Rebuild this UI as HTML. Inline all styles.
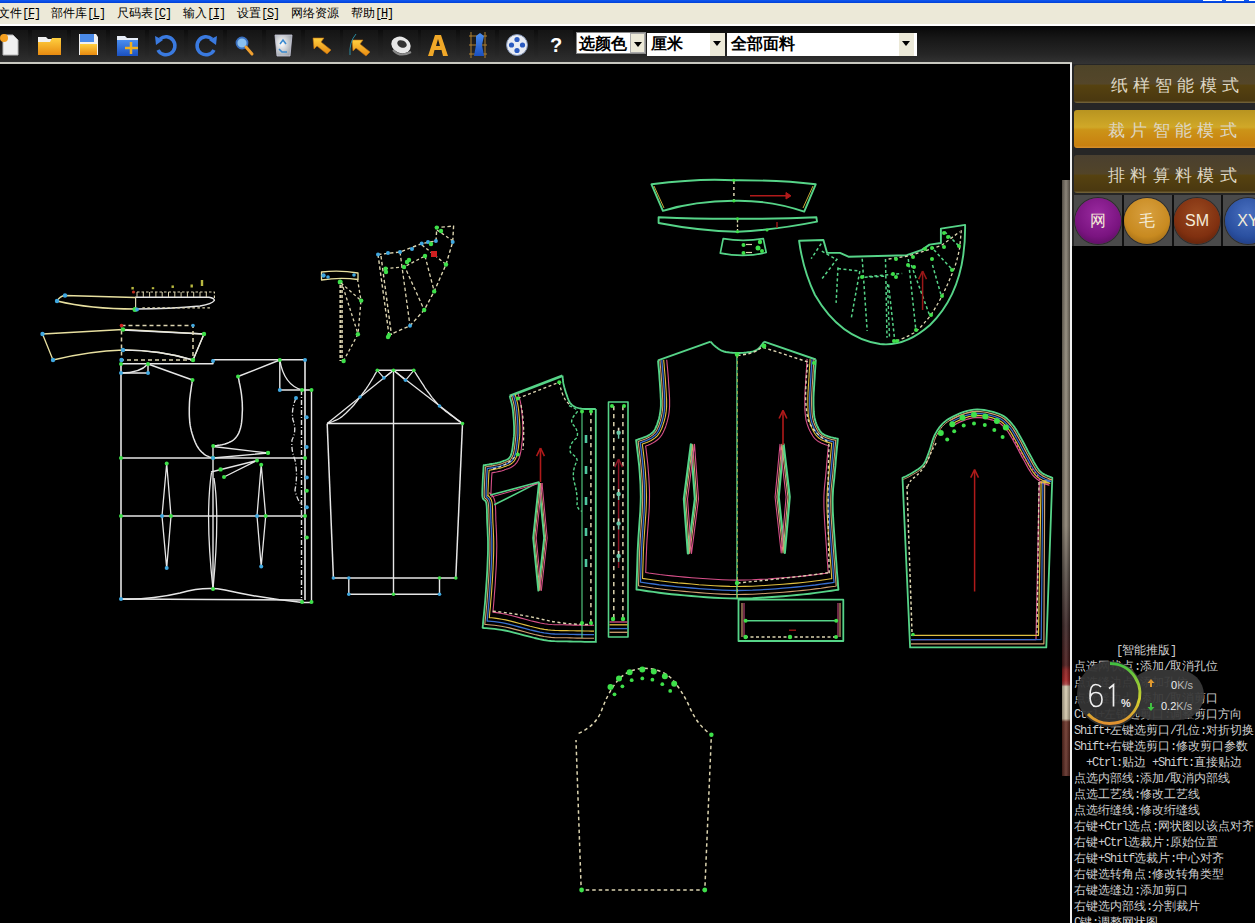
<!DOCTYPE html>
<html><head><meta charset="utf-8">
<style>
*{margin:0;padding:0;box-sizing:border-box}
html,body{width:1255px;height:923px;overflow:hidden;background:#000;font-family:"Liberation Sans",sans-serif}
#title{position:absolute;left:0;top:0;width:1255px;height:3px;background:linear-gradient(#1058f0,#0040d8)}
#menu{position:absolute;left:0;top:3px;width:1255px;height:23px;background:#ece9d8;border-bottom:2px solid #fff}
#menu .m{font-style:normal;font-family:"Liberation Mono",monospace;letter-spacing:-1.2px}
#menu span{position:absolute;top:2px;font-size:12px;color:#000;white-space:nowrap;line-height:16px}
#tb{position:absolute;left:0;top:26px;width:1255px;height:38px;background:linear-gradient(#060606 0%,#161616 30%,#262626 75%,#343434 100%)}
#tbline{position:absolute;left:0;top:62px;width:1072px;height:2px;background:#c8c8c0}
.tile{position:absolute;top:4px;width:35px;height:31px;background:linear-gradient(#141414,#222 60%,#2e2e2e)}
#canvas{position:absolute;left:0;top:64px;width:1071px;height:859px;background:#000}
#vline{position:absolute;left:1070px;top:63px;width:2px;height:860px;background:#f0f0f0}
#right{position:absolute;left:1072px;top:64px;width:183px;height:859px;background:#000}
.mbtn{position:absolute;left:2px;width:181px;height:38px;border-radius:3px 0 0 3px;color:#ddd6c4;font-size:17px;letter-spacing:5.3px;text-align:center;line-height:42px;padding-left:24px}
.dd{position:absolute;background:#fff;font-size:16px;font-weight:bold;color:#000;line-height:21px}
.ddb{position:absolute;top:0;width:15px;background:#ece9d8}
.ddb:after{content:"";position:absolute;left:3px;top:8px;border-left:4px solid transparent;border-right:4px solid transparent;border-top:5px solid #000}
#help{position:absolute;left:1074px;top:643px;font-family:"Liberation Mono",monospace;font-size:12px;line-height:16px;color:#cfcfcf;white-space:pre}
.circ{position:absolute;width:46px;height:46px;border-radius:50%;color:#f4ecd8;font-size:16px;text-align:center;line-height:46px;box-shadow:0 0 0 1px rgba(0,0,0,.4)}
#help .l{letter-spacing:-1.2px}
</style></head><body>
<div id="title"></div>
<div style="position:absolute;left:1203px;top:0;width:19px;height:1px;background:#fff"></div><div style="position:absolute;left:1226px;top:0;width:18px;height:1px;background:#fff"></div><div style="position:absolute;left:1249px;top:0;width:6px;height:1px;background:#fff"></div>
<div id="menu">
<span style="left:-2px">文件<i class="m">[<u>F</u>]</i></span>
<span style="left:51px">部件库<i class="m">[<u>L</u>]</i></span>
<span style="left:117px">尺码表<i class="m">[<u>C</u>]</i></span>
<span style="left:183px">输入<i class="m">[<u>I</u>]</i></span>
<span style="left:237px">设置<i class="m">[<u>S</u>]</i></span>
<span style="left:291px">网络资源</span>
<span style="left:351px">帮助<i class="m">[<u>H</u>]</i></span>
</div>
<div id="tb">
<div class="tile" style="left:-7px"></div>
<div class="tile" style="left:32px"></div>
<div class="tile" style="left:71px"></div>
<div class="tile" style="left:110px"></div>
<div class="tile" style="left:149px"></div>
<div class="tile" style="left:188px"></div>
<div class="tile" style="left:227px"></div>
<div class="tile" style="left:266px"></div>
<div class="tile" style="left:305px"></div>
<div class="tile" style="left:343px"></div>
<div class="tile" style="left:383px"></div>
<div class="tile" style="left:421px"></div>
<div class="tile" style="left:460px"></div>
<div class="tile" style="left:499px"></div>
<div class="tile" style="left:538px"></div>
</div>
<div id="tbline"></div>
<svg style="position:absolute;left:0;top:26px" width="580" height="37" viewBox="0 26 580 37">
<defs>
<linearGradient id="gor" x1="0" y1="0" x2="0" y2="1"><stop offset="0" stop-color="#ffd040"/><stop offset="1" stop-color="#e88a10"/></linearGradient>
<linearGradient id="gbl" x1="0" y1="0" x2="0" y2="1"><stop offset="0" stop-color="#4a8ef0"/><stop offset="1" stop-color="#1a50c0"/></linearGradient>
<radialGradient id="gfl" cx=".4" cy=".4" r=".7"><stop offset="0" stop-color="#fff"/><stop offset="1" stop-color="#9aa0a8"/></radialGradient>
</defs>
<!-- new doc -->
<path d="M3 35 L13 35 L18 40 L18 55 L3 55 Z" fill="#f0f0f0" stroke="#b8b8b8" stroke-width="1"/>
<circle cx="4" cy="38" r="4" fill="#f5a020"/>
<!-- open folder -->
<path d="M38 37 L46 37 L48 39 L60 39 L60 55 L38 55 Z" fill="#f0f0f0"/>
<path d="M38 42 L50 42 L52 38 L61 38 L61 55 L38 55 Z" fill="url(#gor)"/>
<!-- save -->
<path d="M79 34 L96 34 L98 37 L98 55 L79 55 Z" fill="#f0f0f0"/>
<rect x="80" y="34" width="14" height="8" fill="#4a8ae8"/>
<rect x="80" y="44" width="17" height="11" fill="url(#gor)"/>
<!-- folder plus -->
<path d="M117 36 L125 36 L127 38 L138 38 L138 56 L117 56 Z" fill="#e8eef8"/>
<path d="M117 40 L138 40 L138 56 L117 56 Z" fill="url(#gbl)"/>
<path d="M131 42 V54 M125 48 H138" stroke="#f0b020" stroke-width="2.5"/>
<!-- undo/redo -->
<path d="M160 39 A9 9 0 1 1 158 50" fill="none" stroke="#3a7ae0" stroke-width="3.5"/>
<path d="M155 36 L163 40 L156 45 Z" fill="#3a7ae0"/>
<path d="M212 39 A9 9 0 1 0 214 50" fill="none" stroke="#3a7ae0" stroke-width="3.5"/>
<path d="M217 36 L209 40 L216 45 Z" fill="#3a7ae0"/>
<!-- zoom -->
<circle cx="242" cy="43" r="5.5" fill="#8ac0f0" stroke="#3a70c0" stroke-width="1.8"/>
<path d="M246 47 L252 54" stroke="#f0a030" stroke-width="3" stroke-linecap="round"/>
<!-- recycle bin -->
<path d="M275 35 H292 L290 56 H277 Z" fill="url(#gfl)" stroke="#ccd" stroke-width=".8"/>
<path d="M280 44 L283 40 L286 44 M279 49 L282 52 H287" fill="none" stroke="#3a8ad0" stroke-width="1.6"/>
<!-- arrows -->
<path d="M313 38 L324 38 L321 42 L331 50 L327 54 L317 46 L314 49 Z" fill="url(#gor)" stroke="#c07010" stroke-width=".6"/>
<path d="M352 40 L363 40 L360 44 L370 52 L366 56 L356 48 L353 51 Z" fill="url(#gor)" stroke="#c07010" stroke-width=".6"/>
<path d="M356 34 Q349 42 350 55" fill="none" stroke="#2a8aa0" stroke-width="1"/>
<!-- ring -->
<ellipse cx="401" cy="45" rx="10" ry="8" fill="#e8e8e8" transform="rotate(25 401 45)"/>
<ellipse cx="402" cy="44" rx="5" ry="3.5" fill="#333" transform="rotate(25 402 44)"/>
<path d="M393 50 Q400 58 411 52" fill="none" stroke="#888" stroke-width="2"/>
<!-- A -->
<path d="M428 56 L435 35 L441 35 L448 56 L443 56 L441.5 50 L434.5 50 L433 56 Z M436 46 L440 46 L438 39 Z" fill="#f0a828" fill-rule="evenodd"/>
<!-- dress form -->
<path d="M471 32 L471 58 M485 32 L485 58" stroke="#b08030" stroke-width="1"/>
<path d="M469 36 H487 M469 45 H487 M469 54 H487" stroke="#b08030" stroke-width="1"/>
<path d="M476 36 L480 33 L484 36 L482 45 L484 56 L474 56 L476 45 Z" fill="url(#gbl)"/>
<!-- film reel -->
<circle cx="517" cy="45" r="10.5" fill="#e8ecf4" stroke="#8090b0" stroke-width="1"/>
<circle cx="517" cy="39.5" r="2.6" fill="#2a5ac0"/><circle cx="517" cy="50.5" r="2.6" fill="#2a5ac0"/>
<circle cx="511.5" cy="45" r="2.6" fill="#2a5ac0"/><circle cx="522.5" cy="45" r="2.6" fill="#2a5ac0"/>
<!-- ? -->
<text x="556" y="52" font-family="Liberation Sans" font-weight="bold" font-size="20" fill="#fff" text-anchor="middle">?</text>
</svg>
<div class="dd" style="left:576px;top:32px;width:70px;height:22px;border:1px solid #888;padding-left:2px">选颜色<div class="ddb" style="left:53px;height:20px;border:1px solid #aaa"></div></div>
<div class="dd" style="left:647px;top:33px;width:78px;height:23px;padding-left:4px">厘米<div class="ddb" style="left:63px;height:23px"></div></div>
<div class="dd" style="left:727px;top:33px;width:190px;height:23px;padding-left:4px">全部面料<div class="ddb" style="left:172px;height:23px"></div></div>
<div id="canvas"></div>
<svg style="position:absolute;left:0;top:0" width="1071" height="923" viewBox="0 0 1071 923" stroke-linecap="butt" stroke-linejoin="round"><path d="M135 297.5 L65 295.5 Q60 296 57 301 Q90 309 135 309" stroke="#e8e0a0" stroke-width="1.3" fill="none"/>
<path d="M135 297.3 L209 297.3 Q214 298 214.4 300.3 Q212 304 200 306 Q170 309 135 309" stroke="#e6e6e6" stroke-width="1.4" fill="none"/>
<path d="M137 292 L214.4 292 L214.4 300" stroke="#dcd4b0" stroke-width="1.2" fill="none" stroke-dasharray="2.5 2"/>
<path d="M142.4 307.9 L210 307.9" stroke="#dcd4b0" stroke-width="1.2" fill="none" stroke-dasharray="2.5 2.5"/>
<path d="M135.6 297L135.6 309" stroke="#dcd4b0" stroke-width="1.2" fill="none"/>
<path d="M137.0 292L137.0 297" stroke="#dcd4b0" stroke-width="1" fill="none"/>
<path d="M143.3 292L143.3 297" stroke="#dcd4b0" stroke-width="1" fill="none"/>
<path d="M149.6 292L149.6 297" stroke="#dcd4b0" stroke-width="1" fill="none"/>
<path d="M155.9 292L155.9 297" stroke="#dcd4b0" stroke-width="1" fill="none"/>
<path d="M162.2 292L162.2 297" stroke="#dcd4b0" stroke-width="1" fill="none"/>
<path d="M168.5 292L168.5 297" stroke="#dcd4b0" stroke-width="1" fill="none"/>
<path d="M174.8 292L174.8 297" stroke="#dcd4b0" stroke-width="1" fill="none"/>
<path d="M181.1 292L181.1 297" stroke="#dcd4b0" stroke-width="1" fill="none"/>
<path d="M187.4 292L187.4 297" stroke="#dcd4b0" stroke-width="1" fill="none"/>
<path d="M193.7 292L193.7 297" stroke="#dcd4b0" stroke-width="1" fill="none"/>
<path d="M200.0 292L200.0 297" stroke="#dcd4b0" stroke-width="1" fill="none"/>
<path d="M206.3 292L206.3 297" stroke="#dcd4b0" stroke-width="1" fill="none"/>
<rect x="131.4" y="286.95" width="2.4" height="2.5" fill="#b8b840"/>
<rect x="151.8" y="287.2" width="2.4" height="2" fill="#b8b840"/>
<rect x="171.5" y="285.45" width="2.4" height="2.5" fill="#b8b840"/>
<rect x="190.5" y="284.5" width="2.4" height="3" fill="#b8b840"/>
<rect x="200.8" y="280.0" width="2.4" height="6" fill="#b8b840"/>
<circle cx="133.5" cy="292" r="1.6" fill="#c03020"/>
<circle cx="57" cy="301" r="2.2" fill="#40a8e0"/>
<circle cx="65" cy="295.5" r="2.2" fill="#40a8e0"/>
<circle cx="135" cy="309.5" r="2.5" fill="#3ee04a"/>
<circle cx="137" cy="309.5" r="2" fill="#40a8e0"/>
<path d="M42.5 334 L123 329.5 L204 334 L193 360 Q160 350 123 350 Q90 351 53 360 Z" stroke="#e8e0a0" stroke-width="1.3" fill="none"/>
<path d="M123 330 L204 334 L193 360 Q160 350 123 350" stroke="#e6e6e6" stroke-width="1.4" fill="none"/>
<path d="M121.5 325.5 L193 325.5 L193 360 L121.5 360 Z" stroke="#dcd4b0" stroke-width="1.5" fill="none" stroke-dasharray="4 3"/>
<circle cx="121.5" cy="325.5" r="1.8" fill="#d02020"/>
<circle cx="193" cy="325.5" r="1.8" fill="#40a8e0"/>
<circle cx="42.5" cy="334" r="2.2" fill="#40a8e0"/>
<circle cx="123" cy="329.5" r="2.2" fill="#3ee04a"/>
<circle cx="204" cy="334" r="2.2" fill="#3ee04a"/>
<circle cx="53" cy="360" r="2.2" fill="#40a8e0"/>
<circle cx="123" cy="350" r="2.2" fill="#40a8e0"/>
<circle cx="193" cy="360" r="2.2" fill="#3ee04a"/>
<circle cx="121.5" cy="360" r="2.2" fill="#40a8e0"/>
<path d="M121 363.8 L212.9 363.8 L212.9 359.7 L305 359.7 L305 600" stroke="#e6e6e6" stroke-width="1.6" fill="none"/>
<path d="M121 364L121 600" stroke="#e6e6e6" stroke-width="1.6" fill="none"/>
<path d="M121 373 L148 373 L148 364" stroke="#e6e6e6" stroke-width="1.4" fill="none"/>
<path d="M121 373 Q140 373 148 364" stroke="#e6e6e6" stroke-width="1.4" fill="none"/>
<path d="M148 364L192.5 380" stroke="#e6e6e6" stroke-width="1.4" fill="none"/>
<path d="M192.5 379.6 192.2 381.4 191.9 383.7 191.4 386.5 191.0 389.6 190.5 392.8 190.1 396.2 189.7 399.4 189.5 402.4 189.4 405.3 189.3 408.2 189.3 411.2 189.3 414.1 189.4 417.1 189.6 419.9 189.8 422.7 190.2 425.4 190.7 428.0 191.3 430.7 192.0 433.2 192.8 435.7 193.6 438.2 194.5 440.4 195.3 442.5 196.2 444.4 197.1 446.1 198.0 447.5 198.9 448.9 199.8 450.0 200.8 451.1 201.7 452.0 202.7 452.9 203.7 453.8 204.7 454.6 205.9 455.3 207.0 455.9 208.2 456.4 209.3 456.9 210.3 457.3 211.2 457.6 211.8 457.9" stroke="#e6e6e6" stroke-width="1.5" fill="none"/>
<path d="M279.8 360L238 376.5" stroke="#e6e6e6" stroke-width="1.4" fill="none"/>
<path d="M238.2 376.7 238.5 378.2 238.9 380.2 239.3 382.5 239.9 385.1 240.4 387.9 240.9 390.6 241.3 393.2 241.6 395.6 241.8 397.8 242.0 399.9 242.2 401.9 242.3 403.9 242.3 405.9 242.4 407.9 242.4 409.9 242.3 411.9 242.2 414.0 242.1 416.1 242.0 418.2 241.8 420.3 241.6 422.4 241.3 424.4 240.9 426.3 240.5 428.0 240.0 429.6 239.5 431.1 238.9 432.6 238.3 433.9 237.6 435.2 236.8 436.4 235.9 437.5 235.0 438.5 234.0 439.5 232.9 440.3 231.7 441.1 230.4 441.8 229.1 442.4 227.7 443.0 226.4 443.5 225.0 444.0 223.5 444.4 221.9 444.8 220.2 445.1 218.5 445.3 216.8 445.6 215.4 445.7 214.1 445.9 213.2 446.0" stroke="#e6e6e6" stroke-width="1.5" fill="none"/>
<path d="M279.8 360 L279.8 390 L311.5 390 L311.5 602.5" stroke="#e6e6e6" stroke-width="1.4" fill="none"/>
<path d="M279.8 360 Q284 385 302 390" stroke="#e6e6e6" stroke-width="1.4" fill="none"/>
<path d="M301.5 390 L301.5 602" stroke="#e0e0e0" stroke-width="1.4" fill="none" stroke-dasharray="5 2 1 2"/>
<path d="M213 446L213 458" stroke="#e6e6e6" stroke-width="1.4" fill="none"/>
<path d="M296 398 Q291 410 293 420 Q297 430 292 440 Q291 450 295 460 Q298 475 295 490 Q297 500 302 505" stroke="#e0e0e0" stroke-width="1.3" fill="none" stroke-dasharray="5 2 1 2"/>
<path d="M121 458L305 458" stroke="#e6e6e6" stroke-width="1.5" fill="none"/>
<path d="M121 516L305 516" stroke="#e6e6e6" stroke-width="1.5" fill="none"/>
<path d="M213 446.5 L268 453 L213 458" stroke="#e6e6e6" stroke-width="1.3" fill="none"/>
<path d="M211 472 L257 460.5 L224 477" stroke="#e6e6e6" stroke-width="1.3" fill="none"/>
<path d="M213 458L213 589" stroke="#e6e6e6" stroke-width="1.4" fill="none"/>
<path d="M211.5 472.5 Q205 516 213 589 Q220 516 214 478" stroke="#e6e6e6" stroke-width="1.3" fill="none"/>
<path d="M166.7 463.5 L162 516 L166.7 568 L171 516 Z" stroke="#e6e6e6" stroke-width="1.3" fill="none"/>
<path d="M261.2 464.7 L257 516 L261.2 566.5 L265.7 516 Z" stroke="#e6e6e6" stroke-width="1.3" fill="none"/>
<path d="M121 599 L302.5 600" stroke="#e6e6e6" stroke-width="1.5" fill="none"/>
<path d="M121 599 Q150 600 180 593 Q205 586 225 590 Q260 598 302.5 602.5 L311.5 602.5" stroke="#e6e6e6" stroke-width="1.5" fill="none"/>
<circle cx="121" cy="364" r="2" fill="#3ee04a"/>
<circle cx="148" cy="364" r="2" fill="#3ee04a"/>
<circle cx="192.5" cy="380" r="2" fill="#3ee04a"/>
<circle cx="238" cy="376.5" r="2" fill="#3ee04a"/>
<circle cx="279.8" cy="360" r="2" fill="#3ee04a"/>
<circle cx="121" cy="458" r="2" fill="#3ee04a"/>
<circle cx="121" cy="516" r="2" fill="#3ee04a"/>
<circle cx="213" cy="457.8" r="2" fill="#3ee04a"/>
<circle cx="268" cy="453" r="2" fill="#3ee04a"/>
<circle cx="257" cy="460.5" r="2" fill="#3ee04a"/>
<circle cx="224" cy="477" r="2" fill="#3ee04a"/>
<circle cx="171" cy="516" r="2" fill="#3ee04a"/>
<circle cx="265.7" cy="516" r="2" fill="#3ee04a"/>
<circle cx="166.7" cy="463.5" r="2" fill="#3ee04a"/>
<circle cx="261.2" cy="464.7" r="2" fill="#3ee04a"/>
<circle cx="213" cy="589" r="2" fill="#3ee04a"/>
<circle cx="305" cy="458" r="2" fill="#3ee04a"/>
<circle cx="305" cy="516" r="2" fill="#3ee04a"/>
<circle cx="302" cy="390" r="2" fill="#3ee04a"/>
<circle cx="311.5" cy="390" r="2" fill="#3ee04a"/>
<circle cx="306.8" cy="490.7" r="2" fill="#3ee04a"/>
<circle cx="306.8" cy="537.6" r="2" fill="#3ee04a"/>
<circle cx="311.5" cy="602" r="2" fill="#3ee04a"/>
<circle cx="302" cy="602" r="2" fill="#3ee04a"/>
<circle cx="213.2" cy="446" r="2" fill="#3ee04a"/>
<circle cx="220.6" cy="469.4" r="2.2" fill="#3ee04a"/>
<circle cx="268" cy="452.7" r="2" fill="#3ee04a"/>
<circle cx="121" cy="599" r="2" fill="#40a8e0"/>
<circle cx="121" cy="373" r="2" fill="#40a8e0"/>
<circle cx="148" cy="373" r="2" fill="#40a8e0"/>
<circle cx="213" cy="361" r="2" fill="#40a8e0"/>
<circle cx="305" cy="360" r="2" fill="#40a8e0"/>
<circle cx="306.6" cy="417.3" r="2" fill="#40a8e0"/>
<circle cx="306.6" cy="447" r="2" fill="#40a8e0"/>
<circle cx="279.8" cy="390" r="2" fill="#40a8e0"/>
<circle cx="162" cy="516" r="2" fill="#40a8e0"/>
<circle cx="257" cy="516" r="2" fill="#40a8e0"/>
<circle cx="166.7" cy="568" r="2" fill="#40a8e0"/>
<circle cx="261.2" cy="566.5" r="2" fill="#40a8e0"/>
<circle cx="213" cy="458" r="2" fill="#40a8e0"/>
<circle cx="306.8" cy="477.4" r="2" fill="#40a8e0"/>
<circle cx="306.8" cy="507.2" r="2" fill="#40a8e0"/>
<circle cx="296" cy="398" r="2" fill="#40a8e0"/>
<path d="M321.5 272 Q340 270 358 273 L358 279.5 Q340 277 321.5 280 Z" stroke="#e8e0a0" stroke-width="1.3" fill="none"/>
<circle cx="323.5" cy="275.5" r="2.2" fill="#40a8e0"/>
<circle cx="328" cy="277" r="1.8" fill="#40a8e0"/>
<circle cx="354" cy="275" r="1.8" fill="#40a8e0"/>
<circle cx="340.2" cy="282" r="2.5" fill="#3ee04a"/>
<path d="M340.2 285 L340.2 361 M342 285 L342 361" stroke="#dcd4b0" stroke-width="1.6" fill="none" stroke-dasharray="3 2"/>
<path d="M341 283 L361 300.5 L358 334 L343.5 361" stroke="#dcd4b0" stroke-width="1.3" fill="none" stroke-dasharray="3 2.5"/>
<path d="M357.5 279 L361 300.5" stroke="#dcd4b0" stroke-width="1.3" fill="none" stroke-dasharray="3 2.5"/>
<path d="M343 287 L358 334" stroke="#dcd4b0" stroke-width="1.3" fill="none" stroke-dasharray="3 2.5"/>
<circle cx="361.2" cy="300.6" r="2.2" fill="#3ee04a"/>
<circle cx="357.9" cy="334.2" r="2.2" fill="#3ee04a"/>
<circle cx="343.6" cy="361" r="2.2" fill="#3ee04a"/>
<path d="M378 254.5 L400 252 L422 243.5 L436 241 L436.8 227.6 L453.6 226 L452.7 242 L446 264.5 L434.2 291.4 L424.2 310 L410 325.8 L389 335" stroke="#dcd4b0" stroke-width="1.4" fill="none" stroke-dasharray="3.5 2.5"/>
<path d="M378 254.5 L389 335 M381 256 L391.5 335" stroke="#dcd4b0" stroke-width="1.4" fill="none" stroke-dasharray="3.5 2.5"/>
<path d="M400 252 L410 325.8" stroke="#dcd4b0" stroke-width="1.3" fill="none" stroke-dasharray="3.5 2.5"/>
<path d="M425 256 L434.2 291.4" stroke="#dcd4b0" stroke-width="1.3" fill="none" stroke-dasharray="3.5 2.5"/>
<path d="M404 265 L424.2 310" stroke="#dcd4b0" stroke-width="1.3" fill="none" stroke-dasharray="3.5 2.5"/>
<path d="M437 230 L453 241 M422 245 L446 264.5" stroke="#dcd4b0" stroke-width="1.3" fill="none" stroke-dasharray="3 2.5"/>
<path d="M385 268.7 L404 267 L425 256" stroke="#dcd4b0" stroke-width="1.3" fill="none" stroke-dasharray="3 2.5"/>
<circle cx="378" cy="254.5" r="2" fill="#40a8e0"/>
<circle cx="388" cy="253" r="2" fill="#40a8e0"/>
<circle cx="400" cy="252" r="2" fill="#40a8e0"/>
<circle cx="412" cy="249" r="2" fill="#40a8e0"/>
<circle cx="421.7" cy="243.5" r="2" fill="#40a8e0"/>
<circle cx="428" cy="242" r="2" fill="#40a8e0"/>
<circle cx="435.9" cy="241" r="2" fill="#40a8e0"/>
<circle cx="452.7" cy="242" r="2" fill="#40a8e0"/>
<circle cx="410" cy="325.8" r="2" fill="#40a8e0"/>
<circle cx="436.8" cy="227.6" r="2.2" fill="#3ee04a"/>
<circle cx="441" cy="231" r="2.2" fill="#3ee04a"/>
<circle cx="431" cy="244" r="2.2" fill="#3ee04a"/>
<circle cx="425" cy="256" r="2.2" fill="#3ee04a"/>
<circle cx="409" cy="260" r="2.2" fill="#3ee04a"/>
<circle cx="407" cy="262" r="2.2" fill="#3ee04a"/>
<circle cx="385.6" cy="268.7" r="2.2" fill="#3ee04a"/>
<circle cx="386" cy="272" r="2.2" fill="#3ee04a"/>
<circle cx="404" cy="267" r="2.2" fill="#3ee04a"/>
<circle cx="446" cy="264.5" r="2.2" fill="#3ee04a"/>
<circle cx="434.2" cy="291.4" r="2.2" fill="#3ee04a"/>
<circle cx="424.2" cy="310" r="2.2" fill="#3ee04a"/>
<circle cx="389" cy="335" r="2.2" fill="#3ee04a"/>
<circle cx="388" cy="337" r="2.2" fill="#3ee04a"/>
<rect x="431" y="251" width="6" height="6" fill="#d02020"/>
<path d="M377.3 370.3 L413.8 370.3" stroke="#e6e6e6" stroke-width="1.4" fill="none"/>
<path d="M393.5 370.3L393.5 594.2" stroke="#e6e6e6" stroke-width="1.4" fill="none"/>
<path d="M327.2 423.6L462.5 423.6" stroke="#e6e6e6" stroke-width="1.5" fill="none"/>
<path d="M327.2 423.6L333.4 578" stroke="#e6e6e6" stroke-width="1.5" fill="none"/>
<path d="M462.5 423.6L455.8 578" stroke="#e6e6e6" stroke-width="1.5" fill="none"/>
<path d="M333.4 578L455.8 578" stroke="#e6e6e6" stroke-width="1.5" fill="none"/>
<path d="M348.8 578 L348.8 594.2 L439.5 594.2 L439.5 578" stroke="#e6e6e6" stroke-width="1.4" fill="none"/>
<path d="M327.2 423.6L393.5 370.3" stroke="#e6e6e6" stroke-width="1.3" fill="none"/>
<path d="M327.2 423.6 328.2 423.2 329.5 422.7 331.1 422.1 332.8 421.5 334.7 420.7 336.6 419.9 338.4 419.0 340.0 418.0 341.6 416.9 343.2 415.6 344.7 414.2 346.3 412.8 347.8 411.3 349.3 409.8 350.7 408.4 352.0 407.0 353.2 405.7 354.3 404.5 355.3 403.2 356.2 402.0 357.2 400.8 358.1 399.5 359.0 398.3 360.0 397.0 361.0 395.7 362.0 394.4 362.9 393.2 363.9 391.9 364.9 390.5 365.9 389.1 366.9 387.6 368.0 386.0 369.2 384.2 370.5 382.0 371.8 379.8 373.2 377.5 374.5 375.2 375.7 373.2 376.7 371.5 377.4 370.3" stroke="#e6e6e6" stroke-width="1.3" fill="none"/>
<path d="M462.5 423.6L393.5 370.3" stroke="#e6e6e6" stroke-width="1.3" fill="none"/>
<path d="M462.5 423.6 461.7 423.0 460.7 422.3 459.4 421.4 458.0 420.4 456.5 419.4 455.0 418.2 453.5 417.1 452.0 416.0 450.5 414.9 449.0 413.8 447.4 412.6 445.8 411.4 444.2 410.1 442.6 408.8 441.0 407.5 439.5 406.0 438.0 404.4 436.5 402.7 435.0 401.0 433.5 399.1 432.0 397.3 430.6 395.5 429.3 393.7 428.0 392.0 426.8 390.4 425.7 388.8 424.7 387.3 423.7 385.7 422.7 384.2 421.8 382.8 420.9 381.4 420.0 380.0 419.1 378.6 418.2 377.2 417.3 375.8 416.4 374.4 415.6 373.1 414.9 372.0 414.3 371.0 413.8 370.3" stroke="#e6e6e6" stroke-width="1.3" fill="none"/>
<path d="M377.4 370.3 L383.9 377.9 L393.5 370.3 M413.8 370.3 L405.5 380.3 L393.5 370.3" stroke="#e6e6e6" stroke-width="1.2" fill="none"/>
<circle cx="377.3" cy="370.3" r="1.8" fill="#3ee04a"/>
<circle cx="393.5" cy="370.3" r="1.8" fill="#3ee04a"/>
<circle cx="413.8" cy="370.3" r="1.8" fill="#3ee04a"/>
<circle cx="462.5" cy="423.6" r="1.8" fill="#3ee04a"/>
<circle cx="393.5" cy="594.2" r="1.8" fill="#3ee04a"/>
<circle cx="439.5" cy="578" r="1.8" fill="#3ee04a"/>
<circle cx="455.8" cy="578" r="1.8" fill="#3ee04a"/>
<circle cx="383.9" cy="377.9" r="1.8" fill="#40a8e0"/>
<circle cx="405.5" cy="380.3" r="1.8" fill="#40a8e0"/>
<circle cx="360" cy="397" r="1.8" fill="#40a8e0"/>
<circle cx="439.5" cy="406" r="1.8" fill="#40a8e0"/>
<circle cx="333.4" cy="578" r="1.8" fill="#40a8e0"/>
<circle cx="348.8" cy="578" r="1.8" fill="#40a8e0"/>
<circle cx="348.8" cy="594.2" r="1.8" fill="#40a8e0"/>
<circle cx="439.5" cy="594.2" r="1.8" fill="#40a8e0"/>
<path d="M509.7 396.0 509.9 396.8 510.2 397.9 510.6 399.2 511.0 400.6 511.4 402.2 511.8 403.8 512.2 405.6 512.5 407.4 512.8 409.3 513.0 411.5 513.2 413.7 513.4 416.1 513.6 418.4 513.8 420.8 513.9 423.0 514.0 425.0 514.1 426.8 514.1 428.5 514.1 430.1 514.1 431.6 514.1 433.1 514.0 434.7 513.9 436.4 513.7 438.2 513.5 440.3 513.2 442.6 512.9 445.1 512.6 447.6 512.2 450.1 511.7 452.4 511.2 454.4 510.5 456.1 509.7 457.4 508.8 458.4 507.7 459.2 506.6 459.8 505.5 460.3 504.3 460.7 503.1 461.1 502.0 461.5 500.9 461.9 499.7 462.3 498.5 462.6 497.3 462.9 496.1 463.1 494.9 463.4 493.8 463.6 492.6 463.8 491.4 464.0 490.1 464.2 488.8 464.5 487.6 464.6 486.4 464.8 485.3 465.0 484.4 465.1 483.7 465.2 483.7 465.2 483.6 466.3 483.5 467.8 483.4 469.6 483.3 471.5 483.1 473.6 483.0 475.8 482.9 477.9 482.8 480.0 482.7 482.1 482.6 484.4 482.5 486.7 482.4 489.1 482.3 491.3 482.3 493.5 482.3 495.4 482.5 497.0 482.8 498.2 483.2 499.0 483.8 499.6 484.3 500.0 484.9 500.4 485.5 501.0 485.9 501.8 486.3 503.0 486.5 504.5 486.7 506.2 486.8 508.0 486.9 510.0 486.9 512.2 487.0 514.6 487.0 517.2 487.1 520.0 487.2 523.1 487.4 526.4 487.6 529.9 487.7 533.6 487.9 537.4 488.0 541.5 488.0 545.7 488.0 550.0 487.9 554.5 487.7 559.3 487.5 564.4 487.3 569.5 487.0 574.7 486.7 579.9 486.3 585.0 486.0 590.0 485.6 595.1 485.2 600.5 484.7 606.0 484.2 611.4 483.7 616.5 483.2 621.1 482.9 624.9 482.6 627.8 482.6 627.8 484.2 628.0 486.2 628.1 488.6 628.3 491.4 628.6 494.4 628.9 497.7 629.3 501.3 629.8 505.0 630.5 509.2 631.4 513.8 632.6 518.9 633.9 524.2 635.3 529.5 636.7 534.6 638.0 539.4 639.1 543.8 640.0 547.7 640.6 551.2 641.0 554.6 641.2 557.7 641.3 560.7 641.4 563.8 641.4 566.8 641.4 570.0 641.5 573.4 641.6 577.1 641.7 580.9 641.7 584.6 641.8 588.2 641.8 591.3 641.9 594.0 641.9 596.0 641.9 595.8 641.9 595.8 409.0" stroke="#56d488" stroke-width="1.8" fill="none"/>
<path d="M595.8 409.0 594.0 409.0 591.5 409.0 588.5 409.0 585.3 409.0 582.4 408.8 580.0 408.5 578.1 408.0 576.3 407.5 574.8 406.8 573.4 406.0 572.2 405.1 571.0 404.0 570.0 402.7 569.1 401.2 568.4 399.6 567.7 397.8 567.1 396.1 566.5 394.4 565.9 392.7 565.3 390.9 564.8 389.1 564.3 387.3 563.9 385.6 563.5 384.0 563.2 382.4 563.0 380.8 562.8 379.2 562.7 377.8 562.6 376.6 562.5 375.7" stroke="#56d488" stroke-width="1.8" fill="none"/>
<path d="M562.5 375.7L509.7 396" stroke="#56d488" stroke-width="2.6" fill="none"/>
<path d="M511.5 395.5 511.8 396.3 512.1 397.4 512.4 398.6 512.8 400.1 513.3 401.7 513.7 403.4 514.1 405.2 514.4 407.1 514.6 409.1 514.9 411.3 515.1 413.6 515.3 415.9 515.5 418.3 515.7 420.6 515.8 422.9 515.9 424.9 516.0 426.8 516.0 428.5 516.0 430.1 516.0 431.6 516.0 433.2 515.9 434.8 515.8 436.5 515.6 438.4 515.4 440.5 515.1 442.8 514.8 445.3 514.5 447.9 514.1 450.4 513.6 452.8 513.0 455.0 512.2 456.9 511.2 458.5 510.0 459.8 508.8 460.8 507.5 461.5 506.2 462.0 504.9 462.5 503.8 462.8 502.7 463.3 501.5 463.7 500.2 464.1 499.0 464.5 497.7 464.8 496.5 465.0 495.3 465.2 494.1 465.4 493.0 465.7 491.7 465.9 490.4 466.1 489.1 466.3 487.8 466.5 486.6 466.7 485.6 466.9 485.5 466.9 485.4 467.9 485.3 469.7 485.2 471.7 485.0 473.8 484.9 475.9 484.8 478.0 484.7 480.1 484.6 482.2 484.5 484.5 484.4 486.8 484.3 489.1 484.2 491.4 484.2 493.4 484.2 495.3 484.4 496.7 484.6 497.6 484.8 497.9 485.0 498.2 485.5 498.5 486.2 499.0 487.0 499.8 487.7 501.1 488.2 502.6 488.4 504.3 488.6 506.0 488.7 507.9 488.8 510.0 488.8 512.2 488.9 514.5 488.9 517.1 489.0 519.9 489.1 523.0 489.3 526.3 489.5 529.8 489.6 533.5 489.8 537.4 489.9 541.5 489.9 545.7 489.9 550.0 489.8 554.6 489.6 559.4 489.4 564.5 489.2 569.6 488.9 574.8 488.6 580.0 488.2 585.2 487.9 590.1 487.5 595.2 487.1 600.7 486.6 606.2 486.1 611.6 485.6 616.7 485.1 621.2 484.8 624.4 486.3 624.5 488.7 624.7 491.5 625.0 494.5 625.3 497.9 625.7 501.4 626.3 505.2 627.0 509.4 627.9 514.1 629.1 519.2 630.4 524.4 631.8 529.7 633.2 534.8 634.5 539.7 635.6 544.0 636.5 547.8 637.0 551.3 637.4 554.6 637.6 557.7 637.7 560.8 637.8 563.8 637.8 566.8 637.8 570.0 637.9 573.5 638.0 577.1 638.1 580.9 638.1 584.6 638.2 588.2 638.2 591.3 638.3 594.0 638.3" stroke="#d0a070" stroke-width="1.1" fill="none"/>
<path d="M513.4 395.0 513.6 395.8 513.9 396.8 514.3 398.1 514.7 399.6 515.1 401.2 515.5 403.0 515.9 404.9 516.3 406.8 516.5 408.9 516.8 411.1 517.0 413.4 517.2 415.8 517.4 418.2 517.6 420.5 517.7 422.8 517.8 424.8 517.9 426.7 517.9 428.4 517.9 430.0 517.9 431.6 517.9 433.2 517.8 434.9 517.7 436.7 517.5 438.6 517.3 440.7 517.0 443.1 516.7 445.6 516.4 448.2 516.0 450.8 515.4 453.3 514.8 455.6 513.9 457.8 512.7 459.7 511.3 461.2 509.8 462.4 508.3 463.2 506.8 463.8 505.5 464.3 504.4 464.6 503.4 465.0 502.1 465.5 500.8 466.0 499.4 466.3 498.1 466.6 496.8 466.9 495.6 467.1 494.5 467.3 493.3 467.5 492.1 467.8 490.8 468.0 489.4 468.2 488.1 468.4 487.3 468.5 487.2 469.8 487.1 471.8 486.9 473.9 486.8 476.0 486.7 478.1 486.6 480.2 486.5 482.3 486.4 484.6 486.3 486.9 486.2 489.2 486.1 491.4 486.1 493.4 486.1 495.1 486.2 496.4 486.4 496.9 486.3 496.8 486.3 496.7 486.6 496.9 487.4 497.6 488.5 498.7 489.5 500.3 490.0 502.2 490.3 504.0 490.5 505.9 490.6 507.8 490.7 509.9 490.7 512.1 490.8 514.5 490.8 517.1 490.9 519.9 491.0 522.9 491.2 526.2 491.4 529.7 491.5 533.4 491.7 537.3 491.8 541.4 491.8 545.7 491.8 550.1 491.7 554.6 491.5 559.5 491.3 564.5 491.1 569.7 490.8 574.9 490.5 580.2 490.1 585.3 489.8 590.3 489.4 595.4 489.0 600.8 488.5 606.3 488.0 611.8 487.5 616.9 487.1 621.0 488.8 621.1 491.6 621.4 494.6 621.7 498.0 622.2 501.6 622.7 505.4 623.4 509.6 624.4 514.3 625.6 519.4 627.0 524.7 628.4 530.0 629.8 535.1 631.0 539.9 632.1 544.1 632.9 547.9 633.4 551.4 633.8 554.7 634.0 557.8 634.1 560.8 634.2 563.8 634.2 566.9 634.2 570.1 634.3 573.5 634.4 577.2 634.5 580.9 634.5 584.7 634.6 588.2 634.6 591.3 634.7 594.0 634.7" stroke="#3a70d0" stroke-width="1.3" fill="none"/>
<path d="M515.2 394.5 515.4 395.3 515.7 396.3 516.1 397.6 516.5 399.1 516.9 400.8 517.4 402.6 517.8 404.5 518.1 406.5 518.4 408.6 518.7 410.9 518.9 413.2 519.1 415.6 519.3 418.0 519.5 420.4 519.6 422.7 519.7 424.8 519.8 426.6 519.8 428.4 519.8 430.0 519.8 431.7 519.8 433.3 519.7 435.0 519.6 436.9 519.4 438.8 519.1 440.9 518.9 443.3 518.6 445.8 518.3 448.5 517.8 451.1 517.3 453.7 516.6 456.2 515.6 458.6 514.3 460.8 512.6 462.6 510.8 464.0 509.1 464.9 507.5 465.6 506.2 466.1 505.1 466.4 504.1 466.8 502.8 467.3 501.3 467.8 499.9 468.2 498.5 468.5 497.2 468.7 496.0 469.0 494.8 469.2 493.7 469.4 492.4 469.6 491.1 469.9 489.7 470.1 489.1 470.2 489.0 471.9 488.8 474.0 488.7 476.1 488.6 478.2 488.5 480.3 488.4 482.4 488.3 484.7 488.2 487.0 488.1 489.3 488.0 491.4 488.0 493.4 488.0 495.0 488.1 496.1 488.2 496.3 487.9 495.8 487.6 495.3 487.7 495.4 488.7 496.1 490.0 497.6 491.2 499.6 491.9 501.8 492.2 503.8 492.4 505.7 492.5 507.7 492.6 509.9 492.6 512.1 492.7 514.5 492.7 517.0 492.8 519.8 492.9 522.8 493.1 526.1 493.3 529.6 493.4 533.3 493.6 537.3 493.7 541.4 493.7 545.7 493.7 550.1 493.6 554.7 493.4 559.6 493.2 564.6 493.0 569.8 492.7 575.1 492.4 580.3 492.0 585.4 491.7 590.4 491.3 595.5 490.8 601.0 490.4 606.5 489.8 611.9 489.4 617.0 489.3 617.6 491.7 617.8 494.8 618.1 498.1 618.6 501.8 619.2 505.6 619.9 509.8 620.9 514.6 622.1 519.7 623.5 524.9 624.9 530.2 626.3 535.3 627.5 540.1 628.6 544.3 629.4 548.1 629.9 551.5 630.2 554.7 630.4 557.8 630.5 560.8 630.6 563.8 630.6 566.9 630.6 570.1 630.7 573.5 630.8 577.2 630.9 580.9 630.9 584.7 631.0 588.2 631.0 591.4 631.1 594.0 631.1" stroke="#e0c040" stroke-width="1.1" fill="none"/>
<path d="M518.1 393.7 518.3 394.5 518.6 395.5 519.0 396.8 519.4 398.3 519.9 400.0 520.4 401.9 520.8 404.0 521.1 406.1 521.4 408.2 521.7 410.5 521.9 412.9 522.2 415.4 522.3 417.8 522.5 420.2 522.6 422.5 522.7 424.6 522.8 426.5 522.9 428.3 522.9 430.0 522.9 431.7 522.8 433.4 522.7 435.2 522.6 437.1 522.4 439.1 522.2 441.2 521.9 443.6 521.6 446.2 521.3 448.9 520.8 451.7 520.2 454.4 519.5 457.2 518.3 460.0 516.7 462.6 514.7 464.9 512.5 466.5 510.4 467.7 508.6 468.4 507.2 468.9 506.1 469.3 505.2 469.6 503.8 470.2 502.2 470.7 500.6 471.1 499.2 471.4 497.8 471.7 496.5 472.0 495.4 472.2 494.2 472.4 493.0 472.6 491.9 472.8 491.9 474.2 491.7 476.3 491.6 478.4 491.5 480.4 491.4 482.5 491.3 484.8 491.2 487.1 491.1 489.4 491.0 491.5 491.0 493.4 491.1 494.8 491.1 495.6 491.0 495.2 490.4 494.0 489.6 493.1 489.5 493.0 490.6 493.8 492.5 495.7 494.0 498.5 494.8 501.1 495.2 503.4 495.4 505.5 495.5 507.6 495.6 509.8 495.7 512.0 495.7 514.4 495.8 517.0 495.8 519.7 496.0 522.7 496.1 525.9 496.3 529.4 496.5 533.2 496.6 537.2 496.7 541.3 496.8 545.7 496.7 550.1 496.6 554.8 496.5 559.7 496.3 564.8 496.0 570.0 495.7 575.2 495.4 580.5 495.1 585.6 494.7 590.6 494.3 595.8 493.9 601.2 493.4 606.8 492.9 612.2 494.9 612.4 498.4 612.9 502.0 613.5 505.9 614.3 510.2 615.3 515.0 616.5 520.1 617.9 525.3 619.3 530.6 620.7 535.7 621.9 540.4 623.0 544.6 623.7 548.3 624.2 551.7 624.5 554.8 624.7 557.8 624.8 560.8 624.8 563.8 624.8 566.9 624.9 570.1 624.9 573.6 625.1 577.2 625.1 581.0 625.2 584.7 625.2 588.2 625.3 591.4 625.3 594.0 625.3" stroke="#d8508a" stroke-width="1.1" fill="none"/>
<path d="M492.8 611.2 Q520 614 545 620 Q565 624.6 592.2 624.6" stroke="#dcd4b0" stroke-width="1.4" fill="none" stroke-dasharray="3 2.5"/>
<path d="M517.8 398.4 L559.2 382.2 Q562 395 566 401 L571 406" stroke="#dcd4b0" stroke-width="1.3" fill="none" stroke-dasharray="3 2.5"/>
<path d="M493 469 Q512 464 518 452" stroke="#dcd4b0" stroke-width="1.3" fill="none" stroke-dasharray="3 2.5"/>
<path d="M521 405 Q525 425 523 450" stroke="#dcd4b0" stroke-width="1.3" fill="none" stroke-dasharray="3 2.5"/>
<path d="M582 411.4L582 638" stroke="#56d488" stroke-width="1.1" fill="none"/>
<path d="M590.9 411L590.9 624" stroke="#dcd4b0" stroke-width="1.5" fill="none" stroke-dasharray="4.2 3.8"/>
<path d="M569 405.7 Q580 410 576.3 413 Q570 420 572.2 423.6 Q580 432 576.3 438.2 Q568 445 570.6 452.8 Q578 458 577 461 Q572 470 573.8 480.5 Q578 495 577 504.8 Q578 510 582 511.3" stroke="#56d488" stroke-width="1.4" fill="none" stroke-dasharray="3 2"/>
<path d="M490.2 495.1 L538.9 482.1 L494.2 504.8" stroke="#56d488" stroke-width="1.6" fill="none"/>
<path d="M491 497 L538.9 483.5" stroke="#d8508a" stroke-width="1" fill="none"/>
<path d="M540.5 482L540.5 448" stroke="#b01a1a" stroke-width="1.6" fill="none"/>
<path d="M540.5 448L536.6 456.1" stroke="#b01a1a" stroke-width="1.6" fill="none"/>
<path d="M540.5 448L544.4 456.1" stroke="#b01a1a" stroke-width="1.6" fill="none"/>
<path d="M539.0 483 L533.2 538 L538.4 590.6 L544.2 538 Z" stroke="#56d488" stroke-width="2.0" fill="none"/>
<path d="M540.5 483 L534.7 538 L539.9 590.6 L545.7 538 Z" stroke="#d0a070" stroke-width="1.0" fill="none"/>
<path d="M542.0 483 L536.2 538 L541.4 590.6 L547.2 538 Z" stroke="#d8508a" stroke-width="1.0" fill="none"/>
<circle cx="559.2" cy="382.2" r="2" fill="#3ee04a"/>
<circle cx="582" cy="411.4" r="2" fill="#3ee04a"/>
<circle cx="591" cy="411.4" r="2" fill="#3ee04a"/>
<circle cx="517.8" cy="398.4" r="2" fill="#3ee04a"/>
<circle cx="517.8" cy="454.5" r="2" fill="#3ee04a"/>
<rect x="584.7" y="435" width="2.6" height="8" fill="#4fc8a0"/>
<rect x="584.7" y="466" width="2.6" height="8" fill="#4fc8a0"/>
<rect x="584.7" y="497" width="2.6" height="8" fill="#4fc8a0"/>
<rect x="584.7" y="528" width="2.6" height="8" fill="#4fc8a0"/>
<rect x="584.7" y="559" width="2.6" height="8" fill="#4fc8a0"/>
<circle cx="582" cy="623" r="2" fill="#3ee04a"/>
<circle cx="591" cy="623" r="2" fill="#3ee04a"/>
<path d="M608.5 402 L628 402 L628 637 L608.5 637 Z" stroke="#56d488" stroke-width="1.6" fill="none"/>
<path d="M613.8 406L613.8 618" stroke="#dcd4b0" stroke-width="1.5" fill="none" stroke-dasharray="4.2 3.8"/>
<path d="M622.9 406L622.9 618" stroke="#dcd4b0" stroke-width="1.5" fill="none" stroke-dasharray="4.2 3.8"/>
<path d="M618.6 568L618.6 459" stroke="#8a1424" stroke-width="1.5" fill="none"/>
<path d="M618.6 459L614.7 467.1" stroke="#8a1424" stroke-width="1.5" fill="none"/>
<path d="M618.6 459L622.5 467.1" stroke="#8a1424" stroke-width="1.5" fill="none"/>
<circle cx="618.6" cy="432.7" r="2.2" fill="#6ac8a8"/>
<path d="M618.6 427.7L618.6 430.7" stroke="#e8e0c8" stroke-width="1.6" fill="none"/>
<path d="M618.6 434.7L618.6 438.7" stroke="#6ac8a8" stroke-width="1.4" fill="none"/>
<circle cx="618.6" cy="494" r="2.2" fill="#6ac8a8"/>
<path d="M618.6 489L618.6 492" stroke="#e8e0c8" stroke-width="1.6" fill="none"/>
<path d="M618.6 496L618.6 500" stroke="#6ac8a8" stroke-width="1.4" fill="none"/>
<circle cx="618.6" cy="523.5" r="2.2" fill="#6ac8a8"/>
<path d="M618.6 518.5L618.6 521.5" stroke="#e8e0c8" stroke-width="1.6" fill="none"/>
<path d="M618.6 525.5L618.6 529.5" stroke="#6ac8a8" stroke-width="1.4" fill="none"/>
<circle cx="618.6" cy="555.9" r="2.2" fill="#6ac8a8"/>
<path d="M618.6 550.9L618.6 553.9" stroke="#e8e0c8" stroke-width="1.6" fill="none"/>
<path d="M618.6 557.9L618.6 561.9" stroke="#6ac8a8" stroke-width="1.4" fill="none"/>
<circle cx="612" cy="406" r="2" fill="#3ee04a"/>
<circle cx="624" cy="406" r="2" fill="#3ee04a"/>
<circle cx="613" cy="619" r="2.2" fill="#3ee04a"/>
<circle cx="623" cy="619" r="2.2" fill="#3ee04a"/>
<path d="M609.5 622L627.5 622" stroke="#d8508a" stroke-width="1.3" fill="none"/>
<path d="M609.5 624.8L627.5 624.8" stroke="#e0c040" stroke-width="1.3" fill="none"/>
<path d="M609.5 628.6L627.5 628.6" stroke="#3a70d0" stroke-width="1.3" fill="none"/>
<path d="M609.5 632.3L627.5 632.3" stroke="#d0a070" stroke-width="1.3" fill="none"/>
<path d="M658.0 360.4 658.2 362.3 658.4 364.8 658.7 367.9 659.0 371.2 659.3 374.8 659.5 378.3 659.8 381.8 660.0 385.0 660.2 388.0 660.4 391.1 660.6 394.2 660.7 397.3 660.9 400.2 660.9 403.2 660.9 406.0 660.7 408.6 660.4 411.1 660.0 413.6 659.6 416.0 659.1 418.2 658.5 420.4 657.8 422.4 657.2 424.3 656.5 426.0 655.8 427.5 655.2 428.8 654.6 430.0 653.9 431.0 653.1 431.9 652.2 432.8 651.2 433.6 650.0 434.5 648.5 435.4 646.7 436.3 644.7 437.1 642.6 437.9 640.6 438.6 638.8 439.2 637.2 439.8 636.1 440.2 636.1 440.2 636.4 442.5 636.8 445.5 637.2 449.1 637.7 453.1 638.2 457.4 638.7 461.7 639.2 466.0 639.5 470.0 639.8 473.8 640.0 477.5 640.3 481.2 640.5 484.9 640.6 488.7 640.7 492.7 640.8 497.0 640.7 501.5 640.5 506.4 640.3 511.5 639.9 516.9 639.5 522.4 639.1 528.1 638.7 533.8 638.3 539.4 638.0 545.0 637.7 550.8 637.5 557.1 637.3 563.6 637.1 570.0 636.9 576.0 636.7 581.5 636.6 586.1 636.5 589.5 636.5 589.5 639.6 589.9 643.5 590.5 648.1 591.2 653.4 591.9 659.1 592.7 665.1 593.5 671.4 594.2 677.7 594.8 684.3 595.4 691.3 596.0 698.7 596.6 706.4 597.2 714.1 597.7 722.0 598.1 729.7 598.4 737.3 598.5 744.9 598.4 752.6 598.2 760.4 597.8 768.2 597.3 775.9 596.8 783.3 596.2 790.3 595.6 796.9 595.0 803.2 594.4 809.5 593.7 815.6 592.9 821.4 592.1 826.7 591.4 831.4 590.7 835.3 590.1 838.4 589.7 838.4 589.7 838.1 586.2 837.8 581.6 837.3 576.2 836.8 570.1 836.4 563.6 835.9 557.1 835.4 550.8 835.0 545.0 834.6 539.4 834.2 533.8 833.8 528.1 833.4 522.4 833.1 516.9 832.8 511.5 832.7 506.4 832.6 501.5 832.7 497.0 832.9 492.8 833.1 488.8 833.5 485.0 833.9 481.3 834.3 477.6 834.6 473.8 835.0 470.0 835.4 465.9 835.7 461.4 836.1 456.9 836.5 452.4 836.9 448.2 837.3 444.4 837.6 441.2 837.8 438.8 837.8 438.8 836.9 438.6 835.8 438.3 834.4 438.1 832.8 437.7 831.2 437.3 829.7 436.9 828.2 436.5 827.0 436.0 825.9 435.5 824.9 435.1 824.0 434.6 823.2 434.1 822.3 433.6 821.5 432.9 820.8 432.0 820.0 431.0 819.2 429.8 818.4 428.4 817.7 426.9 816.9 425.3 816.2 423.6 815.6 421.8 815.1 419.9 814.6 418.0 814.2 416.0 814.0 413.9 813.8 411.7 813.7 409.4 813.6 407.1 813.5 404.8 813.5 402.4 813.5 400.0 813.5 397.6 813.6 395.2 813.7 392.7 813.9 390.2 814.0 387.6 814.2 385.1 814.3 382.5 814.5 380.0 814.7 377.3 814.8 374.4 815.0 371.4 815.2 368.5 815.4 365.7 815.6 363.2 815.7 361.1 815.8 359.5" stroke="#56d488" stroke-width="1.9" fill="none"/>
<path d="M764.1 341.7 763.5 342.5 762.6 343.8 761.6 345.2 760.4 346.6 759.2 347.9 758.0 349.0 756.8 349.8 755.7 350.4 754.4 350.9 753.1 351.3 751.6 351.7 750.0 352.0 748.1 352.3 746.0 352.6 743.8 352.8 741.5 352.9 739.2 353.0 737.0 353.0 734.8 352.9 732.5 352.8 730.2 352.6 728.0 352.3 725.9 352.0 724.0 351.5 722.3 350.9 720.9 350.3 719.5 349.5 718.3 348.7 717.1 347.8 716.0 347.0 714.9 346.1 713.8 345.1 712.8 344.1 711.9 343.1 711.2 342.3 710.6 341.7" stroke="#56d488" stroke-width="1.9" fill="none"/>
<path d="M815.8 359.5L764.1 341.7" stroke="#56d488" stroke-width="1.9" fill="none"/>
<path d="M710.6 341.7L658 360.4" stroke="#56d488" stroke-width="1.9" fill="none"/>
<path d="M659.9 360.2 660.1 362.1 660.3 364.7 660.6 367.7 660.8 371.1 661.2 374.6 661.4 378.2 661.7 381.7 661.9 384.9 662.1 387.9 662.3 391.0 662.5 394.1 662.6 397.2 662.8 400.2 662.8 403.2 662.8 406.0 662.6 408.8 662.3 411.4 661.9 413.9 661.4 416.4 660.9 418.7 660.3 420.9 659.6 423.0 659.0 425.0 658.3 426.7 657.6 428.3 656.9 429.7 656.2 431.0 655.4 432.1 654.5 433.2 653.5 434.2 652.4 435.1 651.0 436.1 649.4 437.1 647.5 438.0 645.4 438.9 643.3 439.7 641.2 440.4 639.4 441.0 638.2 441.5 638.3 442.3 638.6 445.3 639.1 448.9 639.6 452.9 640.1 457.2 640.6 461.5 641.0 465.8 641.4 469.8 641.7 473.6 641.9 477.3 642.2 481.0 642.4 484.8 642.5 488.7 642.6 492.7 642.7 497.0 642.6 501.5 642.4 506.4 642.2 511.6 641.8 517.0 641.4 522.6 641.0 528.2 640.6 533.9 640.2 539.5 639.9 545.1 639.6 550.9 639.4 557.2 639.2 563.6 639.0 570.0 638.8 576.1 638.6 581.5 638.5 585.8 639.7 586.0 643.6 586.5 648.3 587.2 653.5 588.0 659.2 588.7 665.3 589.5 671.5 590.2 677.8 590.8 684.4 591.4 691.4 592.0 698.8 592.6 706.4 593.2 714.2 593.7 722.0 594.1 729.7 594.4 737.3 594.5 744.9 594.4 752.6 594.2 760.4 593.8 768.2 593.3 775.8 592.8 783.2 592.2 790.2 591.6 796.8 591.0 803.1 590.4 809.4 589.7 815.5 588.9 821.2 588.2 826.5 587.4 831.2 586.7 835.2 586.2 836.2 586.0 835.9 581.8 835.4 576.3 835.0 570.2 834.5 563.8 834.0 557.3 833.5 551.0 833.1 545.1 832.7 539.6 832.3 533.9 831.9 528.2 831.5 522.5 831.2 517.0 830.9 511.6 830.8 506.4 830.7 501.5 830.8 496.9 831.0 492.7 831.2 488.6 831.6 484.8 832.0 481.1 832.4 477.4 832.8 473.7 833.1 469.8 833.5 465.7 833.8 461.3 834.3 456.7 834.7 452.3 835.0 448.0 835.4 444.2 835.7 441.0 835.8 440.3 835.4 440.2 834.0 439.9 832.4 439.6 830.8 439.2 829.2 438.7 827.6 438.3 826.3 437.8 825.2 437.3 824.1 436.8 823.1 436.3 822.1 435.7 821.2 435.0 820.2 434.2 819.3 433.2 818.4 432.1 817.6 430.8 816.8 429.3 816.0 427.8 815.2 426.1 814.5 424.3 813.8 422.4 813.2 420.4 812.7 418.4 812.4 416.3 812.1 414.1 811.9 411.8 811.8 409.5 811.7 407.2 811.6 404.8 811.6 402.4 811.6 400.0 811.6 397.6 811.7 395.1 811.8 392.6 812.0 390.0 812.1 387.5 812.3 385.0 812.5 382.4 812.6 379.9 812.8 377.2 812.9 374.3 813.1 371.3 813.3 368.4 813.5 365.6 813.7 363.1 813.8 361.0 813.9 359.4" stroke="#d0a070" stroke-width="1.1" fill="none"/>
<path d="M661.8 360.1 661.9 362.0 662.2 364.5 662.4 367.5 662.7 370.9 663.0 374.5 663.3 378.1 663.6 381.5 663.8 384.8 664.0 387.8 664.2 390.9 664.4 394.0 664.5 397.1 664.7 400.1 664.7 403.2 664.7 406.1 664.5 408.9 664.2 411.6 663.8 414.2 663.3 416.8 662.7 419.2 662.1 421.5 661.4 423.6 660.7 425.6 660.0 427.4 659.3 429.1 658.6 430.6 657.8 432.0 656.9 433.3 655.9 434.5 654.8 435.6 653.5 436.6 652.1 437.7 650.3 438.7 648.3 439.7 646.1 440.6 644.0 441.4 641.9 442.2 640.2 442.8 640.5 445.0 641.0 448.6 641.5 452.7 642.0 457.0 642.5 461.3 642.9 465.6 643.3 469.7 643.6 473.5 643.8 477.2 644.1 480.9 644.3 484.7 644.4 488.6 644.5 492.7 644.6 497.0 644.5 501.6 644.3 506.5 644.1 511.7 643.7 517.2 643.3 522.7 642.9 528.4 642.5 534.0 642.1 539.7 641.8 545.2 641.5 551.0 641.3 557.2 641.1 563.7 640.9 570.1 640.7 576.1 640.5 581.6 640.5 582.1 643.8 582.6 648.4 583.3 653.7 584.0 659.4 584.8 665.4 585.5 671.6 586.2 677.9 586.8 684.4 587.4 691.5 588.0 698.9 588.6 706.5 589.2 714.3 589.7 722.1 590.1 729.8 590.4 737.3 590.5 744.8 590.4 752.5 590.2 760.3 589.8 768.1 589.3 775.7 588.8 783.1 588.2 790.1 587.6 796.7 587.0 803.0 586.4 809.3 585.7 815.4 585.0 821.1 584.2 826.4 583.5 831.1 582.8 834.0 582.4 834.0 581.9 833.5 576.5 833.1 570.4 832.6 563.9 832.1 557.4 831.6 551.1 831.2 545.3 830.8 539.7 830.4 534.0 830.0 528.3 829.6 522.7 829.3 517.1 829.0 511.7 828.9 506.4 828.8 501.5 828.9 496.9 829.1 492.6 829.3 488.5 829.7 484.6 830.1 480.9 830.5 477.2 830.9 473.5 831.2 469.7 831.6 465.5 832.0 461.1 832.4 456.6 832.8 452.1 833.2 447.9 833.5 444.1 833.7 441.8 833.6 441.8 832.0 441.4 830.3 441.0 828.6 440.6 827.0 440.1 825.6 439.5 824.4 439.0 823.3 438.5 822.2 438.0 821.1 437.3 820.0 436.5 818.9 435.6 817.8 434.5 816.9 433.2 816.0 431.8 815.1 430.2 814.2 428.6 813.4 426.8 812.7 424.9 812.0 423.0 811.4 420.9 810.9 418.8 810.5 416.6 810.2 414.3 810.0 412.0 809.9 409.6 809.8 407.2 809.7 404.8 809.7 402.4 809.7 400.0 809.7 397.5 809.8 395.0 809.9 392.5 810.1 389.9 810.2 387.4 810.4 384.8 810.6 382.3 810.7 379.8 810.9 377.1 811.0 374.2 811.2 371.2 811.4 368.3 811.6 365.5 811.8 362.9 811.9 360.8 812.0 359.3" stroke="#3a70d0" stroke-width="1.3" fill="none"/>
<path d="M663.7 359.9 663.8 361.8 664.1 364.3 664.3 367.4 664.6 370.7 664.9 374.3 665.2 377.9 665.5 381.4 665.7 384.6 665.9 387.7 666.1 390.8 666.3 393.9 666.4 397.0 666.6 400.1 666.6 403.2 666.6 406.2 666.4 409.1 666.1 411.9 665.7 414.6 665.2 417.2 664.6 419.6 663.9 422.0 663.2 424.2 662.5 426.3 661.8 428.2 661.0 429.9 660.3 431.5 659.4 433.0 658.4 434.4 657.3 435.8 656.0 437.0 654.7 438.1 653.1 439.3 651.2 440.4 649.1 441.5 646.8 442.4 644.6 443.2 642.5 444.0 642.3 444.0 642.4 444.8 642.9 448.4 643.4 452.4 643.9 456.7 644.4 461.1 644.8 465.5 645.2 469.5 645.5 473.4 645.7 477.1 646.0 480.8 646.2 484.6 646.3 488.6 646.4 492.7 646.5 497.0 646.4 501.6 646.2 506.6 646.0 511.8 645.6 517.3 645.2 522.9 644.8 528.5 644.4 534.2 644.0 539.8 643.7 545.3 643.4 551.1 643.2 557.3 643.0 563.8 642.8 570.1 642.6 576.2 642.5 578.4 643.9 578.6 648.6 579.3 653.8 580.0 659.5 580.8 665.5 581.5 671.7 582.2 678.0 582.9 684.5 583.4 691.6 584.0 698.9 584.7 706.6 585.2 714.3 585.7 722.1 586.1 729.8 586.4 737.3 586.5 744.8 586.4 752.5 586.2 760.3 585.8 768.0 585.3 775.6 584.8 783.0 584.2 790.1 583.6 796.6 583.1 802.9 582.5 809.2 581.8 815.2 581.0 821.0 580.2 826.2 579.5 830.9 578.8 831.8 578.7 831.6 576.6 831.2 570.5 830.7 564.1 830.2 557.6 829.7 551.2 829.3 545.4 828.9 539.8 828.5 534.2 828.1 528.5 827.7 522.8 827.4 517.2 827.1 511.7 827.0 506.5 826.9 501.5 827.0 496.8 827.2 492.5 827.4 488.3 827.8 484.4 828.2 480.7 828.6 477.0 829.0 473.3 829.3 469.5 829.7 465.4 830.1 460.9 830.5 456.4 830.9 451.9 831.3 447.7 831.6 443.9 831.7 443.3 831.6 443.3 829.9 442.9 828.1 442.4 826.4 441.9 824.9 441.3 823.6 440.7 822.5 440.2 821.3 439.7 820.1 438.9 818.8 438.0 817.6 436.9 816.4 435.7 815.3 434.3 814.3 432.8 813.4 431.1 812.5 429.4 811.7 427.6 810.9 425.6 810.2 423.5 809.6 421.4 809.0 419.2 808.6 416.9 808.3 414.5 808.1 412.1 808.0 409.7 807.9 407.3 807.8 404.8 807.8 402.4 807.8 400.0 807.8 397.5 807.9 394.9 808.0 392.4 808.2 389.8 808.3 387.3 808.5 384.7 808.7 382.2 808.8 379.7 809.0 377.0 809.1 374.1 809.3 371.1 809.5 368.1 809.7 365.3 809.9 362.8 810.0 360.7 810.1 359.1" stroke="#e0c040" stroke-width="1.1" fill="none"/>
<path d="M666.7 359.7 666.9 361.5 667.1 364.1 667.4 367.1 667.7 370.5 668.0 374.0 668.3 377.7 668.5 381.2 668.7 384.5 668.9 387.5 669.1 390.6 669.3 393.7 669.5 396.8 669.6 400.0 669.6 403.2 669.6 406.3 669.4 409.3 669.1 412.3 668.7 415.1 668.1 417.8 667.5 420.4 666.8 422.9 666.1 425.2 665.4 427.3 664.6 429.3 663.8 431.1 662.9 432.9 662.0 434.6 660.8 436.3 659.5 437.8 658.1 439.3 656.6 440.5 654.8 441.8 652.6 443.1 650.3 444.2 648.0 445.2 645.7 446.1 645.6 446.1 645.9 448.0 646.4 452.1 646.9 456.4 647.4 460.8 647.9 465.2 648.2 469.3 648.5 473.1 648.8 476.9 649.0 480.6 649.2 484.5 649.4 488.5 649.5 492.6 649.5 497.0 649.4 501.7 649.3 506.7 649.0 512.0 648.6 517.5 648.2 523.1 647.8 528.7 647.4 534.4 647.0 540.0 646.7 545.4 646.5 551.2 646.2 557.4 646.0 563.9 645.8 570.2 645.7 572.5 648.8 573.0 654.0 573.7 659.7 574.5 665.7 575.2 671.9 575.9 678.1 576.5 684.7 577.1 691.7 577.7 699.1 578.3 706.7 578.8 714.4 579.3 722.2 579.7 729.8 580.0 737.3 580.1 744.8 580.0 752.4 579.8 760.2 579.4 767.9 579.0 775.5 578.4 782.9 577.8 789.9 577.2 796.5 576.7 802.8 576.1 809.0 575.4 815.0 574.7 820.7 573.9 826.0 573.2 828.3 572.8 828.1 570.8 827.6 564.3 827.1 557.8 826.7 551.5 826.3 545.6 825.9 540.0 825.5 534.4 825.1 528.7 824.7 523.0 824.4 517.4 824.1 511.9 823.9 506.6 823.9 501.5 823.9 496.7 824.1 492.3 824.4 488.1 824.8 484.1 825.2 480.3 825.6 476.6 825.9 473.0 826.3 469.2 826.6 465.1 827.0 460.7 827.4 456.1 827.8 451.6 828.2 447.4 828.4 445.6 827.3 445.3 825.4 444.7 823.7 444.1 822.4 443.5 821.2 443.0 819.9 442.3 818.4 441.5 816.9 440.4 815.4 439.1 814.0 437.6 812.8 436.0 811.8 434.3 810.8 432.6 809.8 430.7 808.9 428.8 808.1 426.7 807.3 424.5 806.6 422.2 806.0 419.8 805.6 417.3 805.3 414.8 805.1 412.3 804.9 409.8 804.8 407.3 804.8 404.9 804.8 402.4 804.8 400.0 804.8 397.4 804.9 394.8 805.0 392.2 805.1 389.6 805.3 387.1 805.5 384.5 805.6 382.0 805.8 379.5 805.9 376.8 806.1 373.9 806.3 370.9 806.5 367.9 806.7 365.1 806.8 362.6 807.0 360.5 807.1 358.9" stroke="#d8508a" stroke-width="1.1" fill="none"/>
<path d="M737.5 355.5 Q752 354 758 350 L762 347 L808 362 Q805.6 380 805.6 397.7 Q806 412 808.6 421.5 Q815 434 826.5 440.6 L829 445 Q827 500 829.3 574.9" stroke="#dcd4b0" stroke-width="1.4" fill="none" stroke-dasharray="3 2.5"/>
<path d="M737.5 583 Q790 578 829.3 572.6" stroke="#dcd4b0" stroke-width="1.4" fill="none" stroke-dasharray="3 2.5"/>
<path d="M736.9 355L736.9 598" stroke="#56d488" stroke-width="1.3" fill="none"/>
<path d="M737.4 355L737.4 598" stroke="#e0c040" stroke-width="0.7" fill="none" stroke-dasharray="3 3"/>
<path d="M690.9000000000001 444.4 L683.9000000000001 499 L687.9000000000001 553.5 L694.9000000000001 499 Z" stroke="#56d488" stroke-width="2.2" fill="none"/>
<path d="M692.7 444.4 L685.7 499 L689.7 553.5 L696.7 499 Z" stroke="#d0a070" stroke-width="1.1" fill="none"/>
<path d="M694.5 444.4 L687.5 499 L691.5 553.5 L698.5 499 Z" stroke="#d8508a" stroke-width="1.1" fill="none"/>
<path d="M783.5999999999999 444.3 L778.6999999999999 497 L784.8 553 L789.6999999999999 497 Z" stroke="#56d488" stroke-width="2.2" fill="none"/>
<path d="M781.8 444.3 L776.9 497 L783 553 L787.9 497 Z" stroke="#d0a070" stroke-width="1.1" fill="none"/>
<path d="M780.0 444.3 L775.1 497 L781.2 553 L786.1 497 Z" stroke="#d8508a" stroke-width="1.1" fill="none"/>
<path d="M783 445L783 410.4" stroke="#b01a1a" stroke-width="1.6" fill="none"/>
<path d="M783 410.4L779.1 418.5" stroke="#b01a1a" stroke-width="1.6" fill="none"/>
<path d="M783 410.4L786.9 418.5" stroke="#b01a1a" stroke-width="1.6" fill="none"/>
<circle cx="737" cy="354.5" r="2.2" fill="#3ee04a"/>
<circle cx="764" cy="346" r="2.4" fill="#3ee04a"/>
<circle cx="737" cy="583" r="2.2" fill="#3ee04a"/>
<circle cx="814" cy="363" r="2" fill="#3ee04a"/>
<path d="M738.5 599.7 L843.3 599.7 L843.3 641 L738.5 641 Z" stroke="#56d488" stroke-width="1.8" fill="none"/>
<path d="M745.6 620.7L836.2 620.7" stroke="#56d488" stroke-width="1.4" fill="none"/>
<path d="M742 603L742 637" stroke="#d0a070" stroke-width="1.2" fill="none"/>
<path d="M744 603L744 637" stroke="#d8508a" stroke-width="1" fill="none"/>
<path d="M840 603L840 637" stroke="#d0a070" stroke-width="1.2" fill="none"/>
<path d="M838 603L838 637" stroke="#d8508a" stroke-width="1" fill="none"/>
<path d="M745 636.9L836 636.9" stroke="#dcd4b0" stroke-width="1.5" fill="none" stroke-dasharray="3 2.5"/>
<path d="M789 630.2L796 630.2" stroke="#b01a1a" stroke-width="1.2" fill="none"/>
<circle cx="745.6" cy="620.7" r="2" fill="#3ee04a"/>
<circle cx="836.2" cy="620.7" r="2" fill="#3ee04a"/>
<circle cx="745.6" cy="637" r="2.2" fill="#3ee04a"/>
<circle cx="790" cy="637" r="2.2" fill="#3ee04a"/>
<circle cx="836" cy="637" r="2" fill="#3ee04a"/>
<path d="M651.5 184.3 Q700 178 733.9 180.3 Q780 180 815.7 184.3 L804.2 211.6 Q770 200 733.9 200.8 Q695 201 662.9 210.9 Z" stroke="#56d488" stroke-width="1.9" fill="none"/>
<path d="M654 186 L664 208" stroke="#e0c040" stroke-width="0.9" fill="none"/>
<path d="M813 186 L803 208" stroke="#e0c040" stroke-width="0.9" fill="none"/>
<path d="M733.9 181L733.9 200" stroke="#dcd4b0" stroke-width="1.5" fill="none" stroke-dasharray="3 3"/>
<path d="M750 195.8L790 195.8" stroke="#b01a1a" stroke-width="1.5" fill="none"/>
<path d="M786 192.5 L791 195.8 L786 199 Z" stroke="#b01a1a" stroke-width="1" fill="#b01a1a"/>
<circle cx="733.9" cy="180.3" r="1.6" fill="#3ee04a"/>
<circle cx="733.9" cy="200.8" r="1.6" fill="#3ee04a"/>
<path d="M658.6 217.3 Q700 219 737.5 218.8 Q780 219 816.4 217.3 L817 221.6 Q775 230 737.5 231.7 Q700 231 658.6 223 Z" stroke="#56d488" stroke-width="1.9" fill="none"/>
<path d="M737.5 220L737.5 230" stroke="#dcd4b0" stroke-width="1.3" fill="none" stroke-dasharray="2.5 2"/>
<path d="M777 222L777 228" stroke="#b01a1a" stroke-width="1.3" fill="none"/>
<circle cx="737.5" cy="218.8" r="1.6" fill="#3ee04a"/>
<circle cx="737.5" cy="231.7" r="1.6" fill="#3ee04a"/>
<circle cx="767" cy="230" r="1.5" fill="#3ee04a"/>
<path d="M723.2 238.6 Q743 242 763.3 238.6 L766.2 252.5 Q745 258 720.3 253.2 Z" stroke="#56d488" stroke-width="1.7" fill="none"/>
<circle cx="743.5" cy="245" r="2" fill="#3ee04a"/>
<circle cx="743.5" cy="253" r="2" fill="#3ee04a"/>
<circle cx="760" cy="242" r="2.2" fill="#3ee04a"/>
<circle cx="758" cy="248" r="2.5" fill="#3ee04a"/>
<circle cx="762" cy="251" r="2" fill="#3ee04a"/>
<path d="M746 244.5L752 244.5" stroke="#dcd4b0" stroke-width="1.2" fill="none"/>
<path d="M746 252.5L752 252.5" stroke="#dcd4b0" stroke-width="1.2" fill="none"/>
<path d="M799.1 240.8 L823.4 240 L827.1 252.9 L840 252.9 L848.4 256.7 L906.8 255.2 L921.9 249.9 L929.5 244.6 L940.9 243 L940.9 228.6 L965.1 224.9 Q966 290 930 325 Q905 347 880 344 Q840 338 815 295 Q803 270 799.1 240.8 Z" stroke="#56d488" stroke-width="1.9" fill="none"/>
<path d="M821.2 243.7L811.2 258.7" stroke="#56d488" stroke-width="1.5" fill="none" stroke-dasharray="3 2.5"/>
<path d="M821.8 251.2L837.3 259.9" stroke="#56d488" stroke-width="1.5" fill="none" stroke-dasharray="3 2.5"/>
<path d="M837.3 258.7L821.2 279.8" stroke="#56d488" stroke-width="1.5" fill="none" stroke-dasharray="3 2.5"/>
<path d="M838 267.4L836.1 302.9" stroke="#56d488" stroke-width="1.5" fill="none" stroke-dasharray="3 2.5"/>
<path d="M838 268.6L859.8 271.1" stroke="#56d488" stroke-width="1.5" fill="none" stroke-dasharray="3 2.5"/>
<path d="M859.8 271.1L851 319.7" stroke="#56d488" stroke-width="1.5" fill="none" stroke-dasharray="3 2.5"/>
<path d="M862.2 258.7L867.2 330.9" stroke="#56d488" stroke-width="1.5" fill="none" stroke-dasharray="3 2.5"/>
<path d="M864.7 277.3L884.7 276.1" stroke="#56d488" stroke-width="1.5" fill="none" stroke-dasharray="3 2.5"/>
<path d="M888.6 259 L908.3 256 L923.4 251.4 L941.6 245.3 L959.8 231.7" stroke="#dcd4b0" stroke-width="1.3" fill="none" stroke-dasharray="3 2.5"/>
<path d="M961.3 230.2 L959.8 246.8 Q958 258 953.8 269.6 Q948 284 941.6 296.9 Q936 307 931 315 Q923 325 915.9 331.8 Q905 338 896.1 340.9" stroke="#dcd4b0" stroke-width="1.3" fill="none" stroke-dasharray="3 2.5"/>
<path d="M885.5 259L887 337.8" stroke="#56d488" stroke-width="1.5" fill="none" stroke-dasharray="3 2.5"/>
<path d="M888.6 284.7L894.6 339.3" stroke="#56d488" stroke-width="1.5" fill="none" stroke-dasharray="3 2.5"/>
<path d="M908.3 259L915.9 330.2" stroke="#56d488" stroke-width="1.5" fill="none" stroke-dasharray="3 2.5"/>
<path d="M911.3 265L929.5 315" stroke="#56d488" stroke-width="1.5" fill="none" stroke-dasharray="3 2.5"/>
<path d="M932.5 265L941.6 296.9" stroke="#56d488" stroke-width="1.5" fill="none" stroke-dasharray="3 2.5"/>
<path d="M934 249.9L952.2 269.6" stroke="#56d488" stroke-width="1.5" fill="none" stroke-dasharray="3 2.5"/>
<path d="M944.7 231.7L959.8 246.8" stroke="#56d488" stroke-width="1.5" fill="none" stroke-dasharray="3 2.5"/>
<path d="M868.8 276.4L902.2 273.4" stroke="#56d488" stroke-width="1.5" fill="none" stroke-dasharray="3 2.5"/>
<path d="M922.6 310L922.6 271" stroke="#9a1818" stroke-width="1.5" fill="none"/>
<path d="M922.6 271L918.7 279.1" stroke="#9a1818" stroke-width="1.5" fill="none"/>
<path d="M922.6 271L926.5 279.1" stroke="#9a1818" stroke-width="1.5" fill="none"/>
<path d="M887.5 284L889.5 338" stroke="#56d488" stroke-width="1.4" fill="none" stroke-dasharray="3 2.5"/>
<circle cx="896" cy="259" r="2" fill="#3ee04a"/>
<circle cx="913" cy="257" r="2" fill="#3ee04a"/>
<circle cx="925" cy="249" r="2" fill="#3ee04a"/>
<circle cx="932" cy="248" r="2" fill="#3ee04a"/>
<circle cx="944" cy="247" r="2" fill="#3ee04a"/>
<circle cx="944" cy="233" r="2" fill="#3ee04a"/>
<circle cx="948" cy="237" r="2" fill="#3ee04a"/>
<circle cx="959" cy="246" r="2" fill="#3ee04a"/>
<circle cx="952" cy="270" r="2" fill="#3ee04a"/>
<circle cx="942" cy="296" r="2" fill="#3ee04a"/>
<circle cx="931" cy="315" r="2" fill="#3ee04a"/>
<circle cx="916" cy="330" r="2" fill="#3ee04a"/>
<circle cx="894" cy="341" r="2" fill="#3ee04a"/>
<circle cx="897" cy="341" r="2" fill="#3ee04a"/>
<circle cx="908" cy="265" r="2" fill="#3ee04a"/>
<circle cx="914" cy="267" r="2" fill="#3ee04a"/>
<circle cx="893" cy="274" r="2" fill="#3ee04a"/>
<circle cx="896" cy="277" r="2" fill="#3ee04a"/>
<circle cx="932" cy="259" r="2" fill="#3ee04a"/>
<circle cx="862" cy="277" r="2" fill="#3ee04a"/>
<path d="M902.5 477.8 903.1 477.5 903.8 477.2 904.6 476.9 905.5 476.5 906.6 476.0 907.7 475.4 908.9 474.7 910.2 474.0 911.6 473.2 913.2 472.2 914.9 471.2 916.7 470.1 918.5 469.0 920.1 467.7 921.7 466.4 923.0 465.0 924.1 463.5 925.0 461.9 925.8 460.3 926.5 458.6 927.2 456.8 927.9 454.9 928.6 453.0 929.3 451.0 930.1 448.9 930.7 446.7 931.4 444.4 932.1 442.1 932.8 439.7 933.7 437.4 934.6 435.2 935.7 433.1 936.9 431.1 938.1 429.2 939.4 427.4 940.9 425.6 942.4 423.8 944.2 422.2 946.2 420.6 948.4 419.1 951.0 417.6 953.9 416.1 957.1 414.6 960.4 413.2 963.8 411.9 967.3 410.9 970.7 410.1 974.0 409.6 977.3 409.4 980.7 409.6 984.1 410.0 987.5 410.6 990.8 411.3 993.9 412.2 996.8 413.1 999.4 414.0 1001.6 415.0 1003.6 416.1 1005.3 417.2 1006.8 418.5 1008.2 419.8 1009.6 421.2 1010.9 422.7 1012.2 424.2 1013.5 425.8 1014.7 427.4 1015.8 429.1 1016.9 430.8 1017.9 432.6 1019.0 434.4 1020.0 436.3 1021.1 438.2 1022.2 440.2 1023.3 442.2 1024.4 444.2 1025.5 446.3 1026.6 448.5 1027.7 450.6 1028.8 452.7 1030.0 454.8 1031.2 456.9 1032.4 459.2 1033.6 461.5 1034.9 463.7 1036.2 465.9 1037.5 468.0 1038.8 469.8 1040.2 471.4 1041.7 472.7 1043.4 473.9 1045.1 474.8 1046.9 475.6 1048.6 476.3 1050.1 476.9 1051.4 477.4 1052.3 477.8 1046.3 647.4 910.1 647.4 Z" stroke="#56d488" stroke-width="1.8" fill="none"/>
<path d="M903.3 479.4 903.8 479.2 904.5 478.9 905.3 478.5 906.3 478.1 907.4 477.6 908.6 477.0 909.8 476.3 911.1 475.5 912.5 474.7 914.1 473.8 915.8 472.8 917.7 471.7 919.5 470.4 921.3 469.1 922.9 467.7 924.4 466.2 925.6 464.5 926.6 462.8 927.5 461.0 928.2 459.2 928.9 457.4 929.6 455.5 930.2 453.6 931.0 451.6 931.8 449.5 932.5 447.2 933.1 444.9 933.8 442.6 934.5 440.3 935.3 438.0 936.2 436.0 937.3 434.0 938.4 432.1 939.6 430.2 940.9 428.4 942.2 426.7 943.7 425.1 945.3 423.6 947.2 422.1 949.4 420.6 951.9 419.2 954.7 417.7 957.8 416.2 961.1 414.9 964.4 413.7 967.8 412.6 971.1 411.9 974.3 411.4" stroke="#d0a070" stroke-width="1.0" fill="none"/>
<path d="M952.4 426.0 954.8 424.6 957.4 423.3 960.3 421.9 963.3 420.7 966.4 419.5 969.4 418.6 972.2 417.9 974.8 417.6 977.3 417.4 980.0 417.6 983.0 417.9 985.9 418.4 988.9 419.1 991.7 419.8 994.3 420.7 996.5 421.4 998.1 422.2 999.4 422.9 1000.5 423.6 1001.5 424.5 1002.6 425.5 1003.7 426.7 1004.9 428.0 1006.1 429.4 1007.2 430.7 1008.2 432.0 1009.1 433.4 1010.0 434.9 1011.0 436.6 1012.0 438.3 1013.1 440.2 1014.1 442.2 1015.2 444.0 1016.2 445.9 1017.3 447.9 1018.4 450.0 1019.5 452.2 1020.6 454.3 1021.8 456.6 1023.0 458.7 1024.2 460.8 1025.4 463.0 1026.6 465.3 1027.9 467.7 1029.4 470.1 1030.9 472.5 1032.5 474.8 1034.5 477.0 1036.8 479.0 1039.2 480.7 1041.5 482.0 1043.7 483.0 1045.6 483.8 1047.2 484.4 1048.3 484.8 1049.0 485.1 1039.3 482.4 1036.0 639.6 911.0 639.6" stroke="#d8508a" stroke-width="1.2" fill="none"/>
<path d="M949.4 420.8 951.9 419.4 954.8 417.9 957.9 416.4 961.1 415.1 964.5 413.8 967.8 412.8 971.1 412.1 974.2 411.6 977.3 411.4 980.5 411.6 983.8 412.0 987.1 412.5 990.3 413.3 993.4 414.1 996.2 415.0 998.7 415.9 1000.7 416.8 1002.5 417.8 1004.1 418.8 1005.5 420.0 1006.8 421.3 1008.1 422.6 1009.4 424.0 1010.7 425.5 1011.9 427.0 1013.1 428.5 1014.1 430.1 1015.2 431.8 1016.2 433.6 1017.2 435.4 1018.3 437.3 1019.4 439.2 1020.5 441.1 1021.5 443.1 1022.6 445.2 1023.7 447.3 1024.8 449.4 1025.9 451.5 1027.1 453.7 1028.3 455.8 1029.4 457.9 1030.7 460.1 1031.9 462.4 1033.2 464.7 1034.5 467.0 1035.8 469.1 1037.3 471.1 1038.8 472.8 1040.5 474.3 1042.3 475.6 1044.2 476.6 1046.1 477.5 1047.8 478.2 1049.4 478.8 1050.6 479.2 1051.5 479.6 1044.7 480.6 1043.9 643.8 911.0 643.8" stroke="#d0a070" stroke-width="1.2" fill="none"/>
<path d="M950.4 422.6 952.9 421.1 955.7 419.7 958.7 418.3 961.9 416.9 965.1 415.7 968.4 414.8 971.5 414.0 974.4 413.6 977.3 413.4 980.3 413.6 983.5 413.9 986.7 414.5 989.8 415.2 992.8 416.0 995.6 416.9 997.9 417.7 999.9 418.6 1001.5 419.5 1002.9 420.4 1004.2 421.5 1005.4 422.7 1006.6 424.0 1007.9 425.4 1009.2 426.8 1010.4 428.2 1011.4 429.7 1012.5 431.2 1013.5 432.9 1014.5 434.6 1015.5 436.4 1016.5 438.3 1017.6 440.2 1018.7 442.1 1019.8 444.0 1020.8 446.1 1021.9 448.2 1023.0 450.3 1024.2 452.5 1025.3 454.6 1026.5 456.8 1027.7 458.9 1028.9 461.1 1030.1 463.4 1031.4 465.7 1032.8 468.0 1034.2 470.2 1035.7 472.3 1037.4 474.2 1039.2 475.9 1041.3 477.3 1043.3 478.4 1045.3 479.3 1047.1 480.0 1048.7 480.6 1049.8 481.1 1050.7 481.5 1042.9 481.2 1041.2 639.6 911.0 639.6" stroke="#3a70d0" stroke-width="1.2" fill="none"/>
<path d="M951.4 424.3 953.9 422.9 956.6 421.5 959.5 420.1 962.6 418.8 965.7 417.6 968.9 416.7 971.9 416.0 974.6 415.6 977.3 415.4 980.2 415.6 983.2 415.9 986.3 416.5 989.4 417.1 992.3 417.9 994.9 418.8 997.2 419.6 999.0 420.4 1000.4 421.2 1001.7 422.0 1002.9 423.0 1004.0 424.1 1005.2 425.3 1006.4 426.7 1007.7 428.1 1008.8 429.5 1009.8 430.8 1010.8 432.3 1011.7 433.9 1012.7 435.6 1013.7 437.4 1014.8 439.3 1015.9 441.2 1017.0 443.1 1018.0 445.0 1019.1 447.0 1020.1 449.1 1021.2 451.2 1022.4 453.4 1023.6 455.6 1024.8 457.7 1025.9 459.8 1027.1 462.0 1028.4 464.4 1029.7 466.7 1031.1 469.1 1032.5 471.3 1034.1 473.5 1035.9 475.6 1038.0 477.5 1040.2 479.0 1042.4 480.2 1044.5 481.1 1046.4 481.9 1048.0 482.5 1049.1 482.9 1049.8 483.3 1041.1 481.8 1038.5 635.4 911.0 635.4" stroke="#e0c040" stroke-width="1.2" fill="none"/>
<path d="M1013 438 Q1022 455 1030 466 Q1037 474 1040 480" stroke="#d8508a" stroke-width="1.3" fill="none" stroke-dasharray="2 2"/>
<path d="M907.6 486.7 Q911 479 913 478.4 Q918 475 921.7 470.1 Q927 463 930.6 453.5 Q934 446 937 442" stroke="#dcd4b0" stroke-width="1.4" fill="none" stroke-dasharray="2.5 2.5"/>
<path d="M907 486 L912 632" stroke="#dcd4b0" stroke-width="1.5" fill="none" stroke-dasharray="3 2.5"/>
<path d="M1039 482 L1037 633" stroke="#dcd4b0" stroke-width="1.3" fill="none" stroke-dasharray="3 2.5"/>
<path d="M974.6 591.5L974.6 469.6" stroke="#b01a1a" stroke-width="1.5" fill="none"/>
<path d="M974.6 469.6L970.7 477.7" stroke="#b01a1a" stroke-width="1.5" fill="none"/>
<path d="M974.6 469.6L978.5 477.7" stroke="#b01a1a" stroke-width="1.5" fill="none"/>
<circle cx="940.8" cy="433.1" r="3.0" fill="#3ee04a"/>
<circle cx="952.3" cy="424.2" r="3.0" fill="#3ee04a"/>
<circle cx="962.5" cy="417.8" r="3.0" fill="#3ee04a"/>
<circle cx="974" cy="414.7" r="3.0" fill="#3ee04a"/>
<circle cx="985.4" cy="416.6" r="3.0" fill="#3ee04a"/>
<circle cx="996.9" cy="421" r="3.0" fill="#3ee04a"/>
<circle cx="1005.8" cy="427.4" r="3.0" fill="#3ee04a"/>
<circle cx="947.2" cy="439.5" r="2.0" fill="#3ee04a"/>
<circle cx="954.2" cy="431.2" r="2.0" fill="#3ee04a"/>
<circle cx="963.7" cy="425.5" r="2.0" fill="#3ee04a"/>
<circle cx="974" cy="423.6" r="2.0" fill="#3ee04a"/>
<circle cx="984.8" cy="424.9" r="2.0" fill="#3ee04a"/>
<circle cx="994.3" cy="430" r="2.0" fill="#3ee04a"/>
<circle cx="1002.6" cy="437" r="2.0" fill="#3ee04a"/>
<circle cx="913" cy="634.5" r="1.8" fill="#3ee04a"/>
<path d="M578.6 733.4 Q595 726 601 712 Q607 695 615 684 Q625 670 642.3 668.3 Q660 668 671 678 Q682 690 690 708 Q698 726 711.4 734.7 L704.8 890.1 L581.2 890.1 L576 740" stroke="#dcd4b0" stroke-width="1.5" fill="none" stroke-dasharray="3.5 3"/>
<circle cx="610.5" cy="686.9" r="3.0" fill="#3ee04a"/>
<circle cx="619" cy="678.4" r="3.0" fill="#3ee04a"/>
<circle cx="629.6" cy="672.3" r="3.0" fill="#3ee04a"/>
<circle cx="642.3" cy="669.6" r="3.0" fill="#3ee04a"/>
<circle cx="653.8" cy="671.5" r="3.0" fill="#3ee04a"/>
<circle cx="664.9" cy="676.2" r="3.0" fill="#3ee04a"/>
<circle cx="674.2" cy="683.7" r="3.0" fill="#3ee04a"/>
<circle cx="614.5" cy="694.3" r="1.9" fill="#3ee04a"/>
<circle cx="622.4" cy="686.3" r="1.9" fill="#3ee04a"/>
<circle cx="631.7" cy="680.2" r="1.9" fill="#3ee04a"/>
<circle cx="642.3" cy="678.4" r="1.9" fill="#3ee04a"/>
<circle cx="652.4" cy="679.7" r="1.9" fill="#3ee04a"/>
<circle cx="662.3" cy="684.2" r="1.9" fill="#3ee04a"/>
<circle cx="670.2" cy="690.9" r="1.9" fill="#3ee04a"/>
<circle cx="711.4" cy="734.7" r="2.2" fill="#3ee04a"/>
<circle cx="581.6" cy="890" r="2.4" fill="#3ee04a"/>
<circle cx="704.8" cy="890" r="2.4" fill="#3ee04a"/></svg><div style="position:absolute;left:1062px;top:180px;width:8px;height:596px;background:linear-gradient(#7a7266 0%,#8c8474 30%,#8a8070 58%,#5a5048 66%,#3a2424 74.8%,#4a1818 81.4%,#8a1c1c 82.2%,#a82020 83.9%,#b04040 84.6%,#d8ccb0 85%,#d0c4a8 90.4%,#6a3024 90.9%,#5a2820 100%)"></div><div style="position:absolute;left:1062px;top:180px;width:8px;height:596px;background:linear-gradient(90deg,rgba(0,0,0,.35),rgba(255,255,255,.12) 50%,rgba(0,0,0,.35))"></div>
<div id="vline"></div>
<div id="right">
<div style="position:absolute;left:0;top:0;width:183px;height:182px;background:#262626"></div>
<div class="mbtn" style="top:1px;padding-left:26px;background:linear-gradient(#4e4428,#54462a 50%,#564210 53%,#4a3810 94%,#7a6a40)">纸样智能模式</div>
<div class="mbtn" style="top:46px;padding-left:21px;background:linear-gradient(#b89420,#d0a828 45%,#cc9418 52%,#c88010 94%,#d89030)">裁片智能模式</div>
<div class="mbtn" style="top:91px;padding-left:21px;background:linear-gradient(#4a4030,#524428 50%,#564210 53%,#4a3810 94%,#7a6a40)">排料算料模式</div>
<div style="position:absolute;left:2px;top:131px;width:181px;height:51px;background:#4a4a4a">
<div style="position:absolute;left:48px;top:0;width:2px;height:51px;background:#111"></div>
<div style="position:absolute;left:98px;top:0;width:2px;height:51px;background:#111"></div>
<div style="position:absolute;left:147px;top:0;width:2px;height:51px;background:#111"></div>
</div>
<div class="circ" style="left:3px;top:134px;background:radial-gradient(circle at 50% 35%,#9a2aa0,#7a1480 60%,#4a0a50)">网</div>
<div class="circ" style="left:52px;top:134px;background:radial-gradient(circle at 50% 35%,#d8a040,#c88a20 60%,#8a5a10)">毛</div>
<div class="circ" style="left:102px;top:134px;background:radial-gradient(circle at 50% 35%,#9a4a20,#803010 60%,#4a1a08)">SM</div>
<div class="circ" style="left:153px;top:134px;background:radial-gradient(circle at 50% 35%,#4a70c0,#2a50a0 60%,#1a3070)">XY</div>

</div>
<div id="help"><div style="height:16px"><span class="l">       [</span>智能推版<span class="l">]</span></div><div style="height:16px">点选网状点<span class="l">:</span>添加<span class="l">/</span>取消孔位</div><div style="height:16px">点选缝边点<span class="l">:</span>添加孔位</div><div style="height:16px">点选缝边点<span class="l">:</span>添加<span class="l">/</span>取消剪口</div><div style="height:16px"><span class="l">Ctrl+</span>左键选剪口<span class="l">:</span>调整剪口方向</div><div style="height:16px"><span class="l">Shift+</span>左键选剪口<span class="l">/</span>孔位<span class="l">:</span>对折切换</div><div style="height:16px"><span class="l">Shift+</span>右键选剪口<span class="l">:</span>修改剪口参数</div><div style="height:16px"><span class="l">  +Ctrl:</span>贴边<span class="l"> +Shift:</span>直接贴边</div><div style="height:16px">点选内部线<span class="l">:</span>添加<span class="l">/</span>取消内部线</div><div style="height:16px">点选工艺线<span class="l">:</span>修改工艺线</div><div style="height:16px">点选绗缝线<span class="l">:</span>修改绗缝线</div><div style="height:16px">右键<span class="l">+Ctrl</span>选点<span class="l">:</span>网状图以该点对齐</div><div style="height:16px">右键<span class="l">+Ctrl</span>选裁片<span class="l">:</span>原始位置</div><div style="height:16px">右键<span class="l">+Shitf</span>选裁片<span class="l">:</span>中心对齐</div><div style="height:16px">右键选转角点<span class="l">:</span>修改转角类型</div><div style="height:16px">右键选缝边<span class="l">:</span>添加剪口</div><div style="height:16px">右键选内部线<span class="l">:</span>分割裁片</div><div style="height:16px"><span class="l">C</span>键<span class="l">:</span>调整网状图</div></div>
<div style="position:absolute;left:1128px;top:670px;width:76px;height:50px;border-radius:25px;background:rgba(56,56,56,.94)"></div>
<div style="position:absolute;left:1077px;top:661px;width:66px;height:66px;border-radius:50%;background:rgba(52,52,52,.95)"></div>
<svg style="position:absolute;left:1070px;top:655px" width="140" height="75" viewBox="1070 655 140 75">
<defs><linearGradient id="arc" x1="0" y1="0" x2="0" y2="1"><stop offset="0" stop-color="#40c040"/><stop offset=".6" stop-color="#d0d030"/><stop offset="1" stop-color="#e09030"/></linearGradient></defs>
<path d="M1110 663.5 A30 30 0 1 1 1088 714" fill="none" stroke="url(#arc)" stroke-width="3"/>
<path d="M1101 687 Q1099 684.5 1095.5 684.5 Q1090 684.5 1090 696 Q1090 706.5 1096 706.5 Q1102 706.5 1102 699.5 Q1102 692.5 1096 692.5 Q1090.5 692.5 1090 699" fill="none" stroke="#f0f0f0" stroke-width="1.6"/><path d="M1109 688.5 L1113.5 684.8 L1113.5 706.5" fill="none" stroke="#f0f0f0" stroke-width="1.7"/>
<text x="1121" y="707" font-family="Liberation Sans" font-size="11" font-weight="bold" fill="#e8e8e8">%</text>
<path d="M1151 679 L1147.5 683 H1150 V687 H1152 V683 H1154.5 Z" fill="#e09a30"/>
<path d="M1151 711 L1147.5 707 H1150 V703 H1152 V707 H1154.5 Z" fill="#40c040"/>
<text x="1171" y="689" font-family="Liberation Sans" font-size="11" fill="#f0f0f0">0<tspan fill="#b8b8b8">K/s</tspan></text>
<text x="1161" y="710" font-family="Liberation Sans" font-size="11" fill="#f0f0f0">0.2<tspan fill="#b8b8b8">K/s</tspan></text>
</svg>
</body></html>
